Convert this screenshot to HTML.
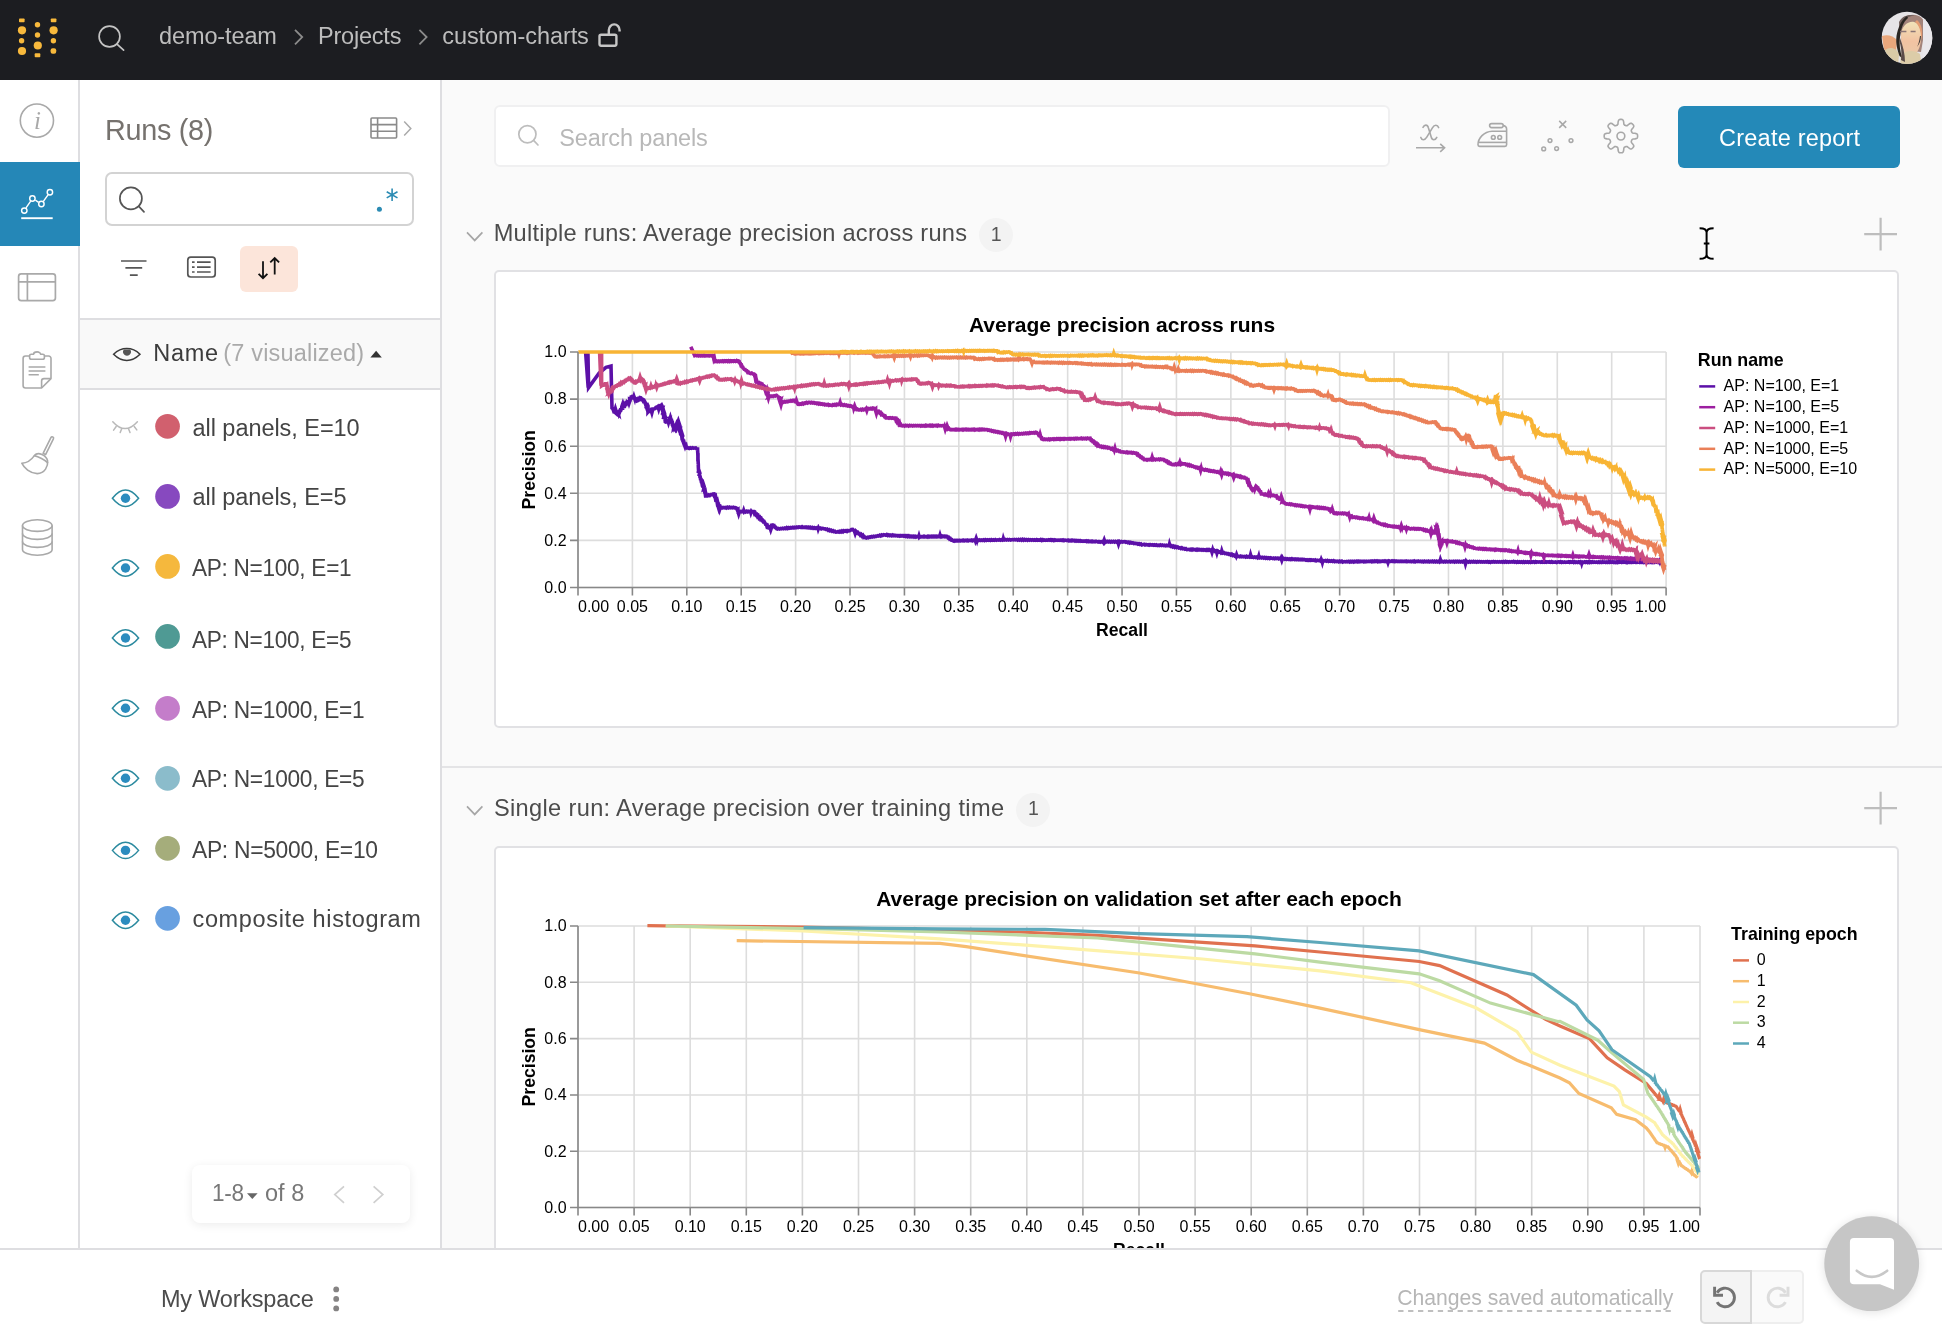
<!DOCTYPE html>
<html lang="en"><head><meta charset="utf-8"><title>custom-charts | Weights &amp; Biases</title>
<style>
html,body{margin:0;padding:0;overflow:hidden}
body{width:1942px;height:1334px;overflow:hidden;position:relative;background:#fafafa;font-family:"Liberation Sans",sans-serif}
#app{position:absolute;left:0;top:0;width:1942px;height:1334px;overflow:hidden;will-change:transform}
.t{position:absolute;white-space:nowrap;line-height:1}
svg{position:absolute;left:0;top:0;overflow:visible}
svg text{font-family:"Liberation Sans",sans-serif}
</style></head><body><div id="app">
<div style="position:absolute;left:442px;top:766px;width:1500px;height:2px;background:#e4e4e6"></div>
<div style="position:absolute;left:494px;top:270px;width:1405px;height:458px;box-sizing:border-box;background:#fff;border:2px solid #e1e1e4;border-radius:5px"></div>
<div style="position:absolute;left:494px;top:846px;width:1405px;height:440px;box-sizing:border-box;background:#fff;border:2px solid #e1e1e4;border-radius:5px"></div>
<div style="position:absolute;left:494px;top:105px;width:896px;height:62px;box-sizing:border-box;background:#fff;border:2px solid #f0f0f1;border-radius:6px"></div>
<div style="position:absolute;left:1678px;top:106px;width:222px;height:62px;background:#2489b8;border-radius:6px"></div>
<div class="t" style="left:559.24px;top:126.61px;font-size:23.5px;color:#b8b8b8;letter-spacing:-0.136px;">Search panels</div>
<div class="t" style="left:1719.12px;top:126.81px;font-size:23.5px;color:#fff;letter-spacing:0.215px;">Create report</div>
<div class="t" style="left:493.66px;top:222.32px;font-size:23.6px;color:#4c4c4c;letter-spacing:0.251px;">Multiple runs: Average precision across runs</div>
<div class="t" style="left:493.94px;top:796.52px;font-size:23.6px;color:#4c4c4c;letter-spacing:0.342px;">Single run: Average precision over training time</div>
<div style="position:absolute;left:979px;top:218px;width:34px;height:34px;background:#f3f3f3;border-radius:50%"></div>
<div class="t" style="left:990.82px;top:225.39px;font-size:19.5px;color:#555;">1</div>
<div style="position:absolute;left:1016px;top:792.5px;width:34px;height:34px;background:#f3f3f3;border-radius:50%"></div>
<div class="t" style="left:1027.92px;top:799.49px;font-size:19.5px;color:#555;">1</div>
<svg width="1942" height="1334" viewBox="0 0 1942 1334">
<path d="M578.00,352.00V587.50M632.40,352.00V587.50M686.81,352.00V587.50M741.21,352.00V587.50M795.62,352.00V587.50M850.02,352.00V587.50M904.43,352.00V587.50M958.83,352.00V587.50M1013.24,352.00V587.50M1067.64,352.00V587.50M1122.05,352.00V587.50M1176.45,352.00V587.50M1230.86,352.00V587.50M1285.26,352.00V587.50M1339.67,352.00V587.50M1394.07,352.00V587.50M1448.48,352.00V587.50M1502.88,352.00V587.50M1557.29,352.00V587.50M1611.69,352.00V587.50M1666.10,352.00V587.50M578.00,587.50H1666.10M578.00,540.40H1666.10M578.00,493.30H1666.10M578.00,446.20H1666.10M578.00,399.10H1666.10M578.00,352.00H1666.10" stroke="#dddddd" stroke-width="1.6" fill="none"/>
<path d="M578.00,587.50v8M632.40,587.50v8M686.81,587.50v8M741.21,587.50v8M795.62,587.50v8M850.02,587.50v8M904.43,587.50v8M958.83,587.50v8M1013.24,587.50v8M1067.64,587.50v8M1122.05,587.50v8M1176.45,587.50v8M1230.86,587.50v8M1285.26,587.50v8M1339.67,587.50v8M1394.07,587.50v8M1448.48,587.50v8M1502.88,587.50v8M1557.29,587.50v8M1611.69,587.50v8M1666.10,587.50v8M578.00,587.50h-8M578.00,540.40h-8M578.00,493.30h-8M578.00,446.20h-8M578.00,399.10h-8M578.00,352.00h-8" stroke="#888888" stroke-width="1.6" fill="none"/>
<path d="M585.6,352.0L588.2,387.6L587.9,352.0L588.6,387.6L599.2,373.0L606.0,367.3L611.0,366.0L612.0,408.0L612.7,408.5L613.4,410.4L614.1,410.0L614.7,412.1L614.4,412.0L615.4,408.7L616.4,412.0L616.1,413.4L616.8,414.0L617.5,412.5L618.2,413.3L617.8,411.4L618.8,414.2L619.9,411.4L619.5,411.3L620.2,409.9L620.9,410.0L621.5,408.3L622.2,408.3L621.8,406.7L622.9,403.5L624.0,406.7L623.6,406.8L624.3,404.8L624.9,405.3L625.6,403.4L626.3,403.9L627.0,401.9L627.7,402.4L628.3,400.3L628.2,400.9L629.0,403.3L629.8,400.9L629.7,399.2L630.4,399.5L631.0,397.5L631.7,397.8L632.4,396.5L633.2,396.7L633.2,398.6L633.9,396.5L634.6,398.6L634.7,398.1L635.5,399.9L636.2,399.4L637.0,401.0L637.8,400.7L638.5,398.8L639.2,399.2L640.0,397.5L640.8,397.7L641.7,399.6L642.5,399.5L643.3,401.2L644.2,400.6L645.0,402.0L645.6,403.4L645.1,403.1L646.2,406.4L647.3,403.1L646.8,405.0L647.4,404.7L648.0,406.0L648.0,407.6L648.0,407.4L648.0,409.3L648.0,409.6L648.0,411.8L648.0,412.0L649.0,410.9L649.9,411.3L650.9,410.0L651.1,410.2L651.9,412.8L652.6,410.2L652.8,409.0L653.8,409.0L654.8,408.7L655.8,407.6L656.7,407.8L657.7,406.6L658.1,406.9L658.7,408.9L659.3,406.9L659.6,405.8L660.6,405.9L661.6,405.0L661.8,405.4L661.3,407.3L662.1,409.5L662.8,407.3L662.3,407.3L662.5,409.6L662.7,409.1L663.0,411.6L663.2,411.3L663.4,413.6L662.8,413.4L663.7,410.9L664.6,413.4L663.9,415.4L664.1,415.5L664.4,417.7L663.7,417.6L664.6,414.3L665.5,417.6L664.8,419.8L665.0,419.6L665.3,421.9L665.5,422.0L666.2,420.8L667.0,421.1L667.8,419.4L667.6,419.7L668.5,422.6L669.4,419.7L669.2,418.2L670.0,418.0L669.7,419.8L670.4,417.5L671.1,419.8L670.8,419.2L671.2,421.3L671.7,421.1L672.1,423.3L672.5,423.1L672.9,425.6L672.5,425.0L673.3,427.3L674.1,425.0L673.8,427.4L674.2,426.9L674.6,429.1L675.0,429.6L675.4,427.9L675.8,428.5L676.1,426.4L675.7,426.1L676.5,424.0L677.3,426.1L676.9,424.1L677.2,424.5L677.6,422.5L678.0,422.0L677.4,423.4L678.3,421.0L679.1,423.4L678.5,423.2L678.8,425.4L678.2,425.2L679.1,428.2L679.9,425.2L678.4,427.8L679.3,430.2L680.2,427.8L679.6,427.7L679.8,429.4L680.1,429.7L680.4,431.5L680.6,431.2L680.9,433.4L681.2,433.7L680.4,435.3L681.4,431.8L682.5,435.3L681.7,435.5L681.9,437.3L682.2,437.1L682.5,439.3L682.7,439.4L683.0,441.0L683.5,442.5L684.0,442.1L684.5,444.2L684.1,444.1L685.0,446.5L685.9,444.1L685.5,446.0L686.0,445.4L686.5,447.6L687.0,448.0L688.1,447.8L689.2,448.4L690.3,447.8L691.4,448.3L692.5,447.8L693.6,448.2L694.7,448.0L695.7,447.9L696.6,448.9L697.6,449.0L697.6,449.6L697.7,451.6L697.7,451.7L697.8,453.8L697.8,453.3L697.9,455.9L697.9,455.4L697.9,457.5L698.0,457.4L698.0,460.0L698.1,459.4L698.1,461.7L698.2,461.5L698.2,464.1L698.3,463.6L698.3,465.9L698.3,465.7L698.4,467.8L698.4,467.6L698.5,470.0L698.5,469.7L698.6,472.0L698.6,472.5L698.0,473.1L698.9,470.1L699.9,473.1L699.2,474.8L699.6,475.1L699.9,476.8L700.2,476.9L700.5,479.0L700.9,479.1L701.2,480.9L701.5,480.8L701.9,483.0L702.2,482.7L702.5,484.6L702.8,484.6L703.1,487.0L702.8,486.5L703.5,484.4L704.2,486.5L703.8,488.5L704.1,488.3L704.5,490.8L704.8,490.6L705.1,492.8L705.4,492.3L705.8,494.9L706.1,494.7L706.4,496.0L707.5,496.0L708.6,495.0L709.7,495.6L710.7,494.6L711.8,494.8L712.9,494.1L714.0,494.0L714.4,495.7L714.9,495.5L715.3,497.8L715.7,497.2L716.1,499.5L716.6,499.3L717.0,501.7L717.4,501.0L717.9,503.1L718.3,503.4L717.8,505.5L718.7,508.4L719.6,505.5L719.1,505.2L718.9,507.3L719.6,509.6L720.3,507.3L720.0,507.6L721.0,507.3L722.1,508.0L723.1,507.4L724.2,507.8L725.2,507.4L726.2,508.0L727.3,507.2L728.3,507.9L729.4,507.2L730.4,507.8L731.4,507.4L732.5,507.8L733.5,507.3L734.6,507.9L735.6,507.6L736.4,508.0L737.2,509.8L737.9,509.4L737.9,511.3L738.7,514.0L739.6,511.3L739.5,511.5L740.5,511.3L741.6,511.8L742.6,511.2L743.3,511.7L743.7,510.5L744.1,511.7L744.7,511.1L745.7,511.9L746.8,511.1L747.8,511.8L748.8,511.3L749.9,511.8L750.5,511.3L750.9,512.7L751.4,511.3L752.0,511.9L753.0,511.5L753.8,511.5L754.5,513.6L755.2,513.0L756.0,515.0L756.8,514.6L757.5,516.4L758.2,515.8L759.0,518.0L759.8,517.4L760.5,519.1L761.2,518.6L762.0,520.5L762.8,520.3L763.5,521.8L764.2,521.6L765.0,523.0L765.6,524.3L766.3,524.4L766.9,526.3L767.5,525.8L768.2,527.8L768.8,528.0L769.8,526.9L769.7,526.9L770.7,529.9L771.7,526.9L771.6,525.2L772.6,525.0L773.4,526.0L774.2,525.7L775.0,527.4L775.9,527.3L776.7,528.7L777.5,529.0L778.5,528.5L779.5,529.0L780.6,528.4L781.6,528.8L782.6,528.2L783.6,528.7L784.7,528.0L785.7,528.6L786.7,527.7L787.7,528.5L788.8,527.7L789.8,528.2L790.8,527.6L791.8,528.0L792.8,527.4L793.9,527.9L794.9,527.3L795.9,527.7L796.9,527.1L798.0,527.5L799.0,526.9L800.0,527.0L801.0,527.4L802.0,526.7L803.0,527.5L804.1,527.1L805.1,527.5L806.1,527.1L807.1,527.7L808.1,527.2L809.1,527.9L810.1,527.3L811.1,528.1L812.2,527.4L813.2,528.3L814.2,527.7L815.2,528.4L816.2,527.9L817.2,528.6L817.9,527.8L818.2,528.9L818.6,527.8L819.2,528.6L820.3,528.1L821.3,528.9L822.3,528.4L823.3,528.6L824.3,529.0L825.3,528.9L826.2,529.5L827.2,529.1L828.2,530.3L829.2,529.8L830.1,530.8L831.1,530.3L832.1,531.3L833.1,530.7L834.1,531.6L835.0,531.3L836.0,532.1L837.0,532.0L838.0,531.5L839.0,532.1L840.0,531.3L841.0,532.0L842.0,531.0L843.0,531.8L844.0,530.8L845.0,531.3L846.0,530.7L847.0,531.4L848.0,530.5L849.0,530.9L850.0,530.6L851.4,529.5L852.7,529.4L853.5,530.2L854.4,530.3L854.5,531.3L855.2,533.5L856.0,531.3L856.1,531.4L856.9,532.8L857.7,532.4L858.6,533.7L859.4,533.5L860.3,535.1L861.1,534.5L861.9,536.1L862.8,535.4L863.6,537.3L864.5,536.8L865.3,537.8L866.3,538.1L867.4,537.3L868.4,537.7L869.4,536.9L870.4,537.2L871.5,536.5L872.5,537.0L873.5,536.3L874.5,536.7L875.6,536.1L876.6,536.4L877.6,535.8L878.6,536.1L879.7,535.2L880.7,535.9L881.7,534.9L882.7,535.4L883.8,534.7L884.8,534.9L885.8,535.3L886.8,534.6L887.8,535.5L888.8,534.9L889.8,535.6L890.8,535.1L891.8,535.7L892.8,534.9L893.9,535.7L894.9,535.3L895.9,535.8L896.9,535.4L897.9,536.0L898.9,535.5L899.9,536.2L900.9,535.6L901.9,536.0L902.9,535.5L903.9,536.2L904.9,535.7L905.9,536.5L906.9,535.8L907.9,536.7L908.9,535.9L910.0,536.8L911.0,536.2L912.0,536.8L913.0,536.2L914.0,537.0L915.0,536.3L916.0,537.1L917.0,536.5L918.0,536.8L918.7,537.1L919.0,536.1L919.3,537.1L920.0,536.4L921.0,537.0L922.0,536.5L923.0,537.0L924.0,536.3L925.0,537.0L926.0,536.5L927.0,537.0L928.0,536.2L929.0,537.0L930.0,536.3L931.0,536.9L932.0,536.2L933.0,536.9L934.0,536.2L935.0,536.8L936.0,536.2L937.0,536.9L938.0,536.3L939.0,536.7L939.7,536.2L940.0,535.2L940.3,536.2L941.0,536.8L942.0,536.0L943.0,536.7L944.0,536.1L945.0,536.8L946.0,536.1L947.0,536.4L947.9,537.7L948.7,537.4L949.6,539.0L950.4,538.6L951.3,539.9L952.1,539.7L953.0,540.7L954.0,541.1L955.0,540.4L956.0,540.9L957.0,540.4L958.0,541.0L959.1,540.3L960.1,540.9L961.1,540.4L962.1,540.8L963.1,540.1L964.1,540.8L965.1,540.2L966.1,540.7L967.1,540.1L968.1,540.8L969.1,540.2L970.1,540.6L971.2,540.1L972.2,540.8L973.2,540.1L974.2,540.6L975.2,540.0L975.4,540.6L976.2,538.3L977.0,540.6L977.2,539.9L978.2,540.6L979.2,539.9L980.2,540.4L981.2,539.9L982.2,540.4L983.3,539.9L984.3,540.6L985.3,539.8L986.3,540.4L987.3,539.8L988.3,540.3L989.3,539.8L990.3,540.4L991.3,539.7L992.3,540.3L993.3,539.8L994.4,540.3L995.4,539.6L996.4,540.2L997.4,539.8L998.4,540.1L999.4,539.6L1000.4,540.2L1001.4,539.7L1002.4,540.2L1003.2,539.6L1003.4,538.7L1003.7,539.6L1004.4,540.0L1005.4,539.5L1006.5,540.0L1007.5,539.5L1008.5,540.0L1009.5,539.5L1010.5,540.0L1011.5,539.7L1012.5,539.6L1013.5,539.9L1014.5,539.5L1015.5,539.9L1016.5,539.5L1017.6,540.1L1018.6,539.4L1019.6,540.1L1020.6,539.4L1021.6,540.2L1022.6,539.4L1023.6,540.2L1024.6,539.5L1025.6,540.1L1026.6,539.6L1027.6,540.3L1028.7,539.6L1029.7,540.2L1030.7,539.7L1031.7,540.2L1032.7,539.7L1033.7,540.2L1034.7,539.8L1035.7,540.3L1036.7,539.7L1037.7,540.3L1038.8,539.9L1039.8,540.3L1040.8,539.6L1041.8,540.4L1042.8,539.7L1043.8,540.3L1044.8,539.9L1045.8,540.3L1046.8,539.9L1047.8,540.3L1048.8,539.7L1049.9,540.3L1050.9,539.7L1051.9,540.4L1052.9,539.8L1053.9,540.5L1054.9,539.9L1055.9,540.4L1056.9,540.1L1057.9,540.3L1058.9,540.1L1059.9,540.4L1061.0,540.0L1062.0,540.5L1063.0,539.9L1064.0,540.6L1065.0,540.1L1066.0,540.3L1067.0,540.6L1068.0,540.1L1069.0,540.8L1070.0,540.3L1071.0,540.8L1072.0,540.1L1073.0,540.8L1074.0,540.4L1075.0,541.1L1076.0,540.4L1077.0,541.1L1078.0,540.5L1079.0,541.1L1080.0,540.6L1081.0,541.3L1082.0,540.9L1083.0,541.3L1084.0,540.9L1085.0,541.3L1086.0,540.8L1087.0,541.6L1088.0,541.0L1089.0,541.7L1090.0,541.2L1091.0,541.7L1092.0,541.1L1093.0,541.7L1094.0,541.4L1095.0,541.8L1096.0,541.3L1097.0,541.7L1098.0,542.1L1099.0,541.5L1100.1,542.1L1101.1,541.6L1102.1,542.0L1103.1,541.3L1103.4,541.9L1104.2,539.9L1104.9,541.9L1105.2,541.4L1106.2,541.9L1107.2,541.3L1108.3,541.9L1109.3,541.4L1110.3,542.1L1111.3,541.4L1112.3,542.0L1113.4,541.4L1114.4,542.1L1115.4,541.4L1116.4,542.0L1117.5,541.4L1117.8,541.9L1118.5,544.1L1119.2,541.9L1119.5,541.5L1120.5,542.1L1121.6,541.5L1122.6,542.0L1123.6,541.7L1124.6,541.6L1125.6,542.3L1126.7,541.9L1127.7,542.6L1128.7,542.1L1129.7,543.0L1130.7,542.4L1131.8,543.1L1132.8,542.8L1133.8,543.5L1134.8,543.2L1135.9,543.7L1136.9,543.4L1137.9,544.1L1138.9,543.6L1139.9,544.4L1141.0,543.9L1142.0,544.9L1143.0,544.6L1144.0,544.3L1145.0,545.0L1146.1,544.5L1147.1,544.9L1148.1,544.6L1149.1,545.2L1150.1,544.6L1151.2,545.1L1152.2,544.7L1153.2,545.2L1154.2,544.8L1155.2,545.3L1156.3,544.8L1157.3,545.5L1158.3,545.1L1159.3,545.5L1160.3,544.9L1161.4,545.5L1162.4,545.0L1163.4,545.6L1164.4,545.3L1165.4,545.8L1166.5,545.3L1167.5,545.7L1168.5,545.6L1169.2,545.6L1169.5,544.3L1169.9,545.6L1170.6,546.3L1171.6,545.8L1172.6,546.8L1173.6,546.1L1174.7,547.3L1175.7,546.6L1176.7,547.5L1177.7,547.0L1178.8,548.0L1179.8,547.7L1180.8,548.5L1181.8,547.8L1182.9,548.7L1183.9,548.5L1184.9,549.2L1185.9,548.7L1187.0,549.6L1188.0,549.5L1189.0,549.3L1190.0,549.9L1191.0,549.2L1192.0,550.0L1193.0,549.2L1194.0,549.8L1195.0,549.4L1196.0,550.0L1197.0,549.3L1198.0,550.1L1199.0,549.4L1200.0,550.0L1201.0,549.5L1202.0,550.1L1203.0,549.6L1204.0,550.2L1205.0,549.7L1206.0,550.3L1207.0,549.5L1208.0,550.3L1209.0,549.5L1210.0,550.3L1211.0,550.0L1211.2,549.9L1212.0,552.3L1212.7,549.9L1213.0,550.8L1214.0,550.3L1214.9,551.3L1215.9,550.8L1216.5,551.8L1216.9,553.1L1217.3,551.8L1217.9,551.1L1218.9,552.0L1219.9,551.7L1220.9,552.8L1221.5,552.1L1221.8,550.9L1222.2,552.1L1222.8,553.0L1223.8,552.6L1224.8,553.5L1225.8,553.2L1226.8,553.9L1227.8,553.6L1228.7,554.3L1229.7,554.0L1230.7,554.9L1231.7,554.2L1232.7,555.4L1233.7,554.9L1234.7,555.9L1235.6,555.3L1236.1,556.3L1236.6,554.7L1237.2,556.3L1237.6,555.9L1238.6,556.3L1239.6,556.7L1240.6,556.1L1241.6,556.7L1242.6,556.4L1243.6,556.8L1244.6,556.5L1245.6,557.1L1246.6,556.3L1247.6,557.0L1248.6,556.7L1249.6,557.1L1250.1,556.7L1250.6,554.7L1251.2,556.7L1251.6,557.2L1252.6,556.9L1253.6,557.5L1254.6,557.0L1255.7,557.5L1256.7,557.0L1257.7,557.8L1258.4,557.2L1258.7,556.3L1258.9,557.2L1259.7,557.9L1260.7,557.3L1261.7,557.9L1262.7,557.4L1263.7,558.1L1264.7,557.4L1265.7,558.2L1266.7,557.6L1267.7,558.3L1268.7,557.8L1269.7,558.5L1270.7,557.8L1271.7,558.2L1272.7,558.6L1273.7,558.1L1274.7,558.7L1275.7,558.1L1276.7,558.6L1277.8,558.1L1278.8,558.9L1279.8,558.3L1280.8,559.0L1281.1,558.3L1281.8,560.3L1282.5,558.3L1282.8,558.9L1283.8,558.5L1284.8,559.2L1285.8,558.7L1286.8,559.4L1287.8,558.8L1288.9,559.5L1289.9,558.9L1290.9,559.5L1291.9,558.8L1292.9,559.5L1293.9,559.0L1294.9,559.6L1295.9,559.0L1296.9,559.6L1297.9,559.1L1298.9,559.8L1300.0,559.3L1301.0,559.8L1302.0,559.3L1303.0,559.8L1304.0,559.5L1305.0,559.8L1306.0,560.2L1307.0,559.7L1308.1,560.4L1309.1,559.8L1310.1,560.4L1311.1,559.8L1312.1,560.3L1313.2,560.0L1314.2,560.5L1315.2,559.9L1316.2,560.8L1317.3,560.2L1318.3,560.6L1319.3,560.2L1320.3,561.0L1321.0,560.4L1321.3,559.5L1321.7,560.4L1321.9,560.8L1322.4,562.5L1322.9,560.8L1323.4,560.6L1324.4,560.9L1325.4,560.5L1326.4,561.1L1327.5,560.5L1328.5,561.3L1329.5,560.8L1330.5,561.2L1331.5,560.8L1332.6,561.4L1333.6,560.8L1334.6,561.6L1335.6,561.1L1336.7,561.5L1337.7,561.2L1338.7,561.8L1339.7,561.1L1340.7,561.7L1341.8,561.2L1342.8,562.1L1343.8,561.7L1344.8,561.5L1345.8,561.9L1346.8,561.5L1347.8,561.9L1348.8,561.4L1349.8,562.0L1350.8,561.3L1351.8,561.9L1352.8,561.4L1353.8,562.0L1354.8,561.3L1355.9,561.7L1356.9,561.2L1357.9,561.9L1358.9,561.2L1359.9,561.8L1360.9,561.3L1361.9,561.6L1362.9,561.3L1363.9,561.9L1364.9,561.3L1365.9,561.8L1366.9,561.3L1367.9,561.6L1368.9,561.2L1369.9,561.6L1370.9,561.1L1371.9,561.8L1372.9,561.1L1373.9,561.6L1374.9,560.9L1375.9,561.5L1376.9,560.9L1377.9,561.7L1379.0,561.0L1380.0,561.6L1381.0,561.1L1382.0,561.4L1383.0,561.0L1384.0,561.5L1385.0,560.9L1386.0,561.5L1387.0,561.1L1387.7,561.6L1388.0,562.5L1388.3,561.6L1389.0,560.8L1390.0,561.2L1391.0,561.4L1392.0,560.9L1393.0,561.5L1394.0,560.9L1395.0,561.6L1396.1,561.0L1397.1,561.5L1398.1,561.1L1399.1,561.6L1400.1,561.1L1401.1,561.5L1402.1,561.1L1403.1,561.6L1404.1,561.2L1405.1,561.5L1406.1,561.0L1407.1,561.7L1408.2,561.2L1409.2,561.6L1410.2,561.2L1411.2,561.7L1412.2,561.2L1413.2,561.7L1414.2,561.0L1415.2,561.8L1416.2,561.2L1417.2,561.6L1418.2,561.1L1419.2,561.6L1420.3,561.2L1421.3,561.8L1422.3,561.3L1423.3,561.9L1424.3,561.2L1425.3,561.8L1426.3,561.3L1427.3,561.8L1428.3,561.2L1429.3,561.9L1430.3,561.3L1431.4,561.8L1432.4,561.2L1433.4,561.8L1434.4,561.2L1435.4,561.9L1436.4,561.2L1437.4,561.9L1438.4,561.3L1439.4,562.0L1439.9,561.4L1440.4,559.7L1441.0,561.4L1441.4,561.8L1442.4,561.5L1443.5,562.0L1444.5,561.3L1445.5,561.9L1446.5,561.3L1447.5,561.9L1448.5,561.7L1449.5,561.3L1450.5,562.0L1451.5,561.5L1452.5,561.8L1453.5,561.3L1454.5,562.0L1455.5,561.3L1456.5,561.9L1457.5,561.3L1458.5,561.9L1459.5,561.4L1460.5,562.0L1461.5,561.5L1462.5,561.9L1463.5,561.3L1464.5,562.1L1464.9,561.6L1465.5,563.9L1466.2,561.6L1466.5,562.1L1467.5,561.5L1468.5,562.1L1469.5,561.4L1470.5,562.1L1471.5,561.5L1472.5,562.0L1473.5,561.4L1474.5,562.0L1475.5,561.5L1476.5,562.2L1477.5,561.6L1478.5,562.0L1479.5,561.5L1480.5,562.0L1481.5,561.6L1482.5,562.1L1483.5,561.7L1484.5,562.1L1485.5,561.6L1486.5,562.0L1487.5,561.6L1488.5,562.2L1489.5,561.7L1490.5,562.3L1491.5,561.7L1492.5,562.1L1493.5,561.5L1494.5,562.0L1495.5,561.7L1496.5,562.1L1497.5,561.7L1498.5,562.1L1499.5,561.7L1500.5,562.1L1501.5,561.7L1502.5,562.2L1503.6,561.6L1504.6,562.1L1505.6,561.5L1506.6,562.2L1507.6,561.7L1508.6,562.2L1509.6,561.7L1510.6,562.1L1511.6,561.7L1512.6,562.1L1513.6,561.5L1514.6,562.2L1515.6,561.7L1516.6,562.3L1517.6,561.7L1518.6,562.3L1519.6,561.8L1520.6,562.3L1521.6,561.8L1522.6,562.4L1523.6,561.7L1524.6,562.4L1525.6,561.8L1526.6,562.2L1527.6,561.8L1528.6,562.4L1529.6,561.8L1530.6,562.3L1531.6,561.6L1532.6,562.2L1533.6,561.7L1534.6,562.3L1535.6,561.6L1536.6,562.2L1537.6,561.9L1538.6,562.2L1539.6,561.9L1540.6,562.3L1541.6,561.7L1542.6,562.2L1543.6,561.9L1544.6,562.3L1545.6,561.7L1546.6,562.3L1547.6,561.9L1548.6,562.2L1549.6,561.8L1550.6,562.3L1551.6,561.7L1552.6,562.3L1553.6,562.0L1554.6,562.2L1555.6,561.9L1556.6,562.5L1557.6,562.1L1558.6,561.9L1559.6,562.3L1560.6,561.7L1561.6,562.4L1562.6,561.9L1563.6,562.3L1564.6,561.9L1565.6,562.4L1566.6,562.0L1567.6,562.2L1568.6,561.8L1569.6,562.4L1570.6,561.7L1571.7,562.2L1572.7,561.7L1573.7,562.5L1574.7,561.8L1575.7,562.5L1576.7,562.0L1577.7,562.4L1578.7,561.8L1579.7,562.5L1580.7,561.8L1581.4,562.3L1581.7,563.3L1582.0,562.3L1582.7,562.0L1583.7,562.5L1584.7,561.8L1585.7,562.4L1586.7,561.8L1587.7,562.5L1588.7,561.8L1589.7,562.5L1590.7,561.8L1591.7,562.4L1592.7,561.8L1593.7,562.3L1594.7,561.9L1595.7,562.3L1596.7,561.9L1597.8,562.5L1598.8,561.9L1599.8,562.4L1600.8,561.9L1601.8,562.4L1602.8,561.8L1603.8,562.3L1604.8,561.9L1605.8,562.4L1606.8,561.9L1607.8,562.4L1608.8,561.8L1609.8,562.4L1610.8,561.8L1611.8,562.3L1612.8,561.8L1613.8,562.4L1614.8,562.0L1615.8,562.5L1616.8,561.7L1617.8,562.5L1618.8,561.8L1619.8,562.3L1620.8,561.7L1621.8,562.4L1622.8,561.7L1623.9,562.3L1624.9,561.8L1625.9,562.4L1626.4,561.8L1626.9,560.6L1627.3,561.8L1627.9,562.4L1628.9,561.8L1629.9,562.4L1630.9,561.7L1631.9,562.4L1632.9,561.8L1633.9,562.3L1634.9,561.9L1635.9,562.4L1636.9,561.7L1637.9,562.3L1638.9,561.9L1639.9,562.4L1640.9,561.9L1641.9,562.4L1642.9,561.7L1643.9,562.5L1644.9,561.8L1645.9,562.4L1646.9,561.7L1647.9,562.5L1648.9,561.8L1650.0,562.4L1651.0,561.9L1652.0,562.5L1653.0,561.7L1654.0,562.5L1655.0,561.7L1656.0,562.3L1657.0,561.8L1658.0,562.4L1659.0,561.8L1659.5,562.5L1660.0,561.2L1660.4,562.5L1661.0,561.7L1662.0,562.5L1663.0,562.1" stroke="#5c10a8" stroke-width="3.6" fill="none" stroke-linejoin="miter" stroke-miterlimit="4"/>
<path d="M690.8,346.8L694.7,355.6L695.7,355.2L696.8,355.7L697.8,355.2L698.8,355.9L699.8,355.3L700.9,355.9L701.9,355.3L702.9,355.9L704.0,355.2L705.0,355.9L706.0,355.5L707.0,355.9L708.1,355.4L709.1,355.9L710.1,355.4L711.1,355.8L712.2,355.3L713.2,355.6L713.5,357.2L713.9,356.7L714.2,359.2L714.5,358.7L714.9,360.9L715.2,361.4L716.2,361.0L717.2,361.7L718.3,361.1L719.3,361.6L720.3,361.0L721.3,361.5L722.3,360.9L723.3,361.6L724.4,360.9L725.4,361.4L726.4,360.9L727.4,361.6L728.4,360.8L729.4,361.6L730.5,360.9L731.5,361.4L732.5,360.9L733.5,361.4L734.5,360.8L735.5,361.4L736.6,360.6L737.6,361.4L738.6,361.0L739.2,361.3L739.8,363.2L740.4,363.4L741.0,365.4L741.6,365.2L742.2,367.0L742.8,367.1L743.4,368.3L744.2,369.3L745.1,369.4L745.9,370.6L746.8,370.7L747.6,372.3L748.5,372.0L749.3,373.0L750.5,373.5L751.7,373.0L752.9,373.9L754.1,374.0L754.5,374.4L754.8,376.3L755.2,376.7L755.5,378.7L755.9,378.1L756.3,380.7L756.6,380.4L757.0,381.9L757.9,383.0L758.8,382.7L759.6,384.2L760.5,383.6L761.4,385.1L762.3,384.5L763.1,386.2L764.0,386.0L764.9,386.8L764.7,388.1L765.3,390.2L765.9,388.1L765.7,388.1L766.1,390.6L766.5,389.8L766.8,392.2L767.2,392.0L767.6,394.3L768.0,394.1L767.8,396.1L768.4,398.2L769.0,396.1L768.8,396.5L769.9,396.0L771.0,396.5L772.0,396.0L773.1,396.4L774.2,395.7L775.3,396.0L776.3,395.3L777.4,395.9L778.5,395.5L778.1,395.9L778.9,398.5L779.8,395.9L779.3,397.8L779.7,398.0L780.2,400.3L780.6,400.0L780.1,401.9L781.0,404.9L781.8,401.9L781.4,402.4L782.4,401.8L783.5,402.2L784.5,401.6L785.6,402.0L786.6,401.4L787.7,401.7L788.8,401.1L789.8,401.3L790.9,400.6L791.9,401.1L793.0,400.4L794.0,400.4L794.8,401.5L795.6,401.3L795.4,403.4L796.4,400.5L797.4,403.4L797.2,403.0L798.0,404.3L799.1,404.4L800.1,403.7L801.2,404.1L802.3,403.2L803.3,403.9L804.4,403.0L805.4,403.3L806.5,402.5L807.6,403.1L808.6,402.4L809.7,402.4L810.7,403.0L811.7,402.4L812.7,403.0L813.8,402.5L814.8,403.3L815.8,403.0L816.8,403.7L817.8,403.2L818.8,404.0L819.8,403.4L820.9,404.2L821.9,403.8L822.9,404.5L823.9,404.1L824.9,404.9L825.9,404.4L826.9,404.9L828.0,404.4L829.0,405.3L830.0,404.9L831.0,405.3L832.0,405.6L833.0,404.7L834.0,405.2L835.0,404.4L836.0,405.1L837.0,404.2L838.0,404.8L839.0,404.3L839.5,404.1L840.1,402.4L840.6,404.1L841.1,405.0L842.2,404.6L843.2,405.4L844.3,404.7L845.4,405.5L846.4,405.1L847.5,406.0L848.5,405.6L849.6,406.2L850.6,405.8L851.7,406.3L852.7,407.3L853.6,407.1L853.8,408.1L854.6,405.9L855.4,408.1L855.6,407.9L856.6,409.5L857.5,409.1L858.5,410.0L859.5,410.0L860.6,409.4L861.6,410.0L862.6,409.2L863.7,409.8L864.7,409.1L865.7,409.4L866.1,408.8L866.8,410.6L867.4,408.8L867.8,409.2L868.8,408.5L869.9,408.9L870.9,408.3L871.9,408.9L873.0,407.9L874.0,408.2L874.8,409.4L875.6,408.8L875.6,410.7L876.4,413.4L877.2,410.7L877.2,410.0L878.0,411.8L878.8,411.5L879.6,412.8L880.4,412.4L881.2,414.4L882.0,413.9L882.8,415.2L883.6,415.2L884.4,416.5L885.2,416.1L886.0,418.0L886.8,418.0L887.9,417.8L889.0,418.2L890.1,417.7L891.3,418.2L892.4,417.8L893.5,418.3L894.6,418.0L895.3,418.0L896.0,420.3L896.6,419.7L897.3,421.9L898.0,421.1L898.7,423.5L899.4,422.5L900.0,424.8L900.7,424.4L901.4,425.7L902.4,425.9L903.4,425.5L904.5,426.1L905.5,425.3L906.5,425.8L907.5,425.5L908.6,426.1L909.6,425.4L910.6,425.9L911.6,425.5L912.6,426.0L913.7,425.5L914.7,425.9L915.7,425.5L916.7,425.9L917.8,425.5L918.8,425.9L919.8,425.5L920.8,426.1L921.8,425.5L922.9,426.0L923.9,425.5L924.9,426.1L925.9,425.3L926.9,425.9L928.0,425.5L929.0,426.0L930.0,425.3L931.0,426.0L932.1,425.3L933.1,426.1L934.1,425.5L935.1,425.8L936.1,425.3L937.2,426.1L938.2,425.3L939.2,425.9L940.2,425.6L941.3,425.9L942.3,425.5L943.3,425.7L944.3,426.5L944.4,426.3L945.2,429.1L946.1,426.3L946.2,427.8L946.5,427.5L947.1,425.7L947.8,427.5L948.1,428.9L949.0,428.4L950.0,429.6L951.0,429.9L952.0,429.4L953.0,429.8L954.0,429.4L955.0,429.9L956.0,429.2L957.0,429.9L958.0,429.4L959.0,430.0L960.0,429.4L961.0,429.8L962.0,429.3L963.0,430.0L964.0,429.3L965.0,429.8L966.0,429.2L967.0,429.9L968.0,429.3L969.0,429.9L970.0,429.4L971.0,429.9L972.0,429.3L973.0,429.9L974.0,429.2L975.0,430.0L976.0,429.5L977.0,429.8L978.0,429.3L979.0,430.0L980.0,429.2L981.0,429.8L982.0,429.2L983.0,429.8L984.0,429.3L985.0,429.8L986.0,429.6L987.0,429.5L988.0,430.2L988.9,430.0L989.9,430.6L990.9,430.3L991.9,431.2L992.9,430.8L993.8,431.6L994.8,431.1L995.8,431.9L996.8,431.6L997.8,432.4L998.7,431.9L999.7,432.7L1000.7,432.3L1001.7,433.1L1002.6,432.7L1003.6,433.7L1004.6,433.3L1004.9,433.9L1005.6,436.3L1006.3,433.9L1006.6,433.6L1007.5,434.5L1008.5,434.0L1009.5,434.5L1010.0,434.8L1010.5,436.6L1011.0,434.8L1011.5,434.0L1012.5,434.4L1013.5,433.8L1014.6,434.4L1015.6,433.7L1016.6,434.2L1017.6,433.5L1018.6,434.2L1019.6,433.5L1020.6,434.0L1021.6,433.5L1022.6,433.9L1023.7,433.2L1024.7,433.7L1025.7,433.1L1026.7,433.6L1027.7,433.0L1028.7,433.6L1029.7,432.7L1030.7,433.2L1031.7,432.7L1032.8,433.0L1033.8,432.5L1034.8,433.1L1035.8,432.3L1036.8,432.6L1037.5,433.6L1038.1,433.8L1038.8,435.3L1039.4,435.0L1039.3,437.2L1040.1,434.4L1040.9,437.2L1040.7,436.6L1041.4,438.3L1042.0,438.1L1042.7,439.4L1043.7,439.6L1044.7,439.0L1045.7,439.5L1046.8,439.1L1047.8,439.6L1048.8,438.9L1049.8,439.7L1050.8,439.0L1051.8,439.3L1052.9,438.8L1053.9,439.5L1054.9,438.8L1055.9,439.4L1056.9,438.7L1057.9,439.2L1058.9,438.6L1060.0,439.4L1061.0,438.6L1062.0,439.2L1063.0,438.6L1064.0,439.3L1065.0,438.6L1066.1,439.1L1067.1,438.7L1068.1,439.1L1069.1,438.5L1070.1,439.1L1071.1,438.5L1072.1,438.9L1073.2,438.5L1074.2,439.1L1075.2,438.4L1076.2,438.9L1077.2,438.3L1078.2,438.8L1079.2,438.5L1080.3,438.7L1081.3,438.2L1082.3,438.9L1083.3,438.3L1084.3,438.8L1085.3,438.3L1086.4,438.9L1087.4,438.1L1088.4,438.6L1089.4,438.4L1090.2,438.3L1091.0,440.2L1091.8,440.0L1092.6,441.4L1093.4,441.2L1094.2,442.8L1095.0,442.5L1095.8,444.3L1096.6,443.7L1097.4,445.5L1098.2,444.8L1099.0,446.2L1100.0,446.7L1101.0,446.2L1102.0,447.2L1103.0,446.5L1104.0,447.5L1105.0,446.8L1106.0,447.6L1107.0,447.2L1108.0,448.1L1109.0,447.5L1110.0,448.1L1111.0,449.0L1112.0,448.4L1112.9,449.6L1113.9,449.0L1114.3,450.1L1114.9,448.2L1115.4,450.1L1115.8,449.7L1116.8,450.8L1117.8,450.2L1118.8,451.2L1119.8,451.0L1120.7,452.0L1121.7,452.0L1122.7,451.9L1123.8,452.4L1124.8,452.1L1125.9,452.6L1126.9,451.9L1128.0,452.8L1129.0,452.3L1130.1,452.8L1131.1,452.3L1132.2,453.1L1133.2,452.6L1134.3,453.2L1135.3,453.0L1136.2,453.0L1137.1,454.6L1137.9,454.2L1138.8,455.8L1139.7,455.7L1140.6,457.2L1141.5,457.0L1142.4,458.4L1143.2,458.3L1144.1,459.8L1145.0,459.8L1146.0,459.4L1147.1,460.1L1148.1,459.5L1149.1,459.8L1150.2,459.3L1151.2,459.8L1151.6,459.2L1152.2,457.1L1152.9,459.2L1153.3,459.8L1154.3,459.1L1155.4,459.9L1156.4,459.2L1157.4,459.6L1158.5,459.1L1159.5,459.8L1160.5,459.0L1161.6,459.5L1162.6,459.3L1163.5,459.5L1164.4,460.5L1165.3,460.4L1166.2,461.5L1167.1,461.2L1167.9,462.6L1168.8,462.2L1169.7,463.7L1170.6,463.4L1171.5,464.4L1172.4,464.7L1173.5,464.4L1174.5,464.8L1175.6,464.0L1176.6,464.7L1177.7,463.8L1178.7,464.4L1179.1,463.9L1179.8,462.1L1180.4,463.9L1180.8,464.4L1181.9,463.5L1182.9,464.1L1184.0,463.7L1185.0,463.7L1186.0,464.7L1186.9,464.4L1187.9,465.4L1188.9,464.7L1189.8,465.8L1190.8,465.3L1191.8,466.3L1192.8,466.0L1193.8,466.9L1194.7,466.7L1195.7,467.6L1196.7,467.1L1197.7,468.1L1198.6,467.7L1199.6,468.7L1199.9,468.3L1200.6,470.5L1201.2,468.3L1201.5,469.5L1202.5,469.0L1203.5,469.6L1204.5,470.2L1205.5,469.5L1206.5,470.3L1207.5,469.9L1208.6,470.8L1209.6,470.3L1210.6,471.2L1211.6,470.8L1212.6,471.5L1213.6,471.0L1214.6,471.8L1215.6,471.5L1216.6,472.1L1217.7,471.6L1218.7,472.5L1219.7,472.3L1220.1,472.9L1220.7,471.3L1221.2,472.9L1221.0,472.6L1221.7,474.8L1222.4,472.6L1222.7,473.2L1223.7,472.9L1224.7,473.6L1225.7,473.1L1226.8,474.0L1227.8,473.4L1228.8,474.5L1229.8,473.8L1230.8,474.4L1231.8,475.0L1232.8,474.5L1232.8,475.3L1233.7,477.8L1234.6,475.3L1234.7,475.2L1235.7,476.0L1236.7,475.5L1237.6,476.3L1238.6,475.9L1239.6,476.9L1240.5,476.3L1241.5,477.6L1242.5,477.1L1243.5,477.8L1244.5,477.4L1245.4,478.3L1246.4,478.3L1246.8,478.9L1247.3,480.9L1247.7,480.6L1248.2,482.6L1248.6,482.0L1249.1,484.3L1249.5,484.0L1250.0,485.9L1250.4,486.1L1250.9,487.8L1251.3,487.9L1251.8,489.5L1252.2,490.0L1253.0,488.8L1253.7,489.1L1253.5,487.3L1254.5,489.8L1255.4,487.3L1255.2,487.6L1256.0,486.1L1256.7,486.7L1257.3,488.4L1258.0,488.2L1258.7,490.0L1259.3,490.0L1260.0,491.7L1260.7,491.7L1261.3,494.0L1262.0,494.0L1263.0,494.0L1264.1,494.8L1265.1,494.0L1266.2,495.0L1267.2,494.4L1267.8,495.1L1268.3,493.8L1268.7,495.1L1269.3,494.6L1270.0,495.3L1270.4,494.0L1270.7,495.3L1271.4,494.9L1272.5,495.6L1273.5,495.2L1274.6,496.0L1275.6,495.9L1276.4,495.8L1277.2,497.8L1278.0,497.6L1278.9,498.9L1279.7,498.8L1280.5,500.4L1280.3,499.7L1281.3,496.5L1282.4,499.7L1282.1,501.5L1283.0,501.0L1283.8,502.7L1284.6,502.7L1285.4,503.7L1286.4,504.1L1287.4,503.8L1288.5,504.3L1289.5,503.9L1290.5,504.6L1291.5,504.1L1292.5,504.8L1293.6,504.6L1294.6,505.3L1295.6,504.8L1296.6,505.6L1297.6,505.1L1298.6,505.7L1299.7,505.3L1300.7,506.1L1301.7,505.6L1302.7,506.4L1303.7,506.0L1304.8,506.7L1305.8,506.2L1306.8,506.6L1307.8,506.9L1308.8,506.5L1309.2,507.1L1309.9,509.4L1310.5,507.1L1310.9,506.7L1311.9,507.5L1312.9,506.9L1313.9,507.4L1315.0,507.1L1316.0,507.7L1317.0,507.1L1318.0,508.0L1319.0,507.3L1320.0,508.2L1321.1,507.5L1322.1,508.3L1323.1,507.7L1324.1,508.5L1325.1,507.9L1326.2,508.7L1327.2,508.3L1328.2,508.5L1329.0,509.8L1329.9,509.4L1330.7,511.2L1331.5,510.5L1331.4,512.4L1332.3,509.3L1333.3,512.4L1333.2,512.0L1334.0,513.4L1335.1,513.6L1336.1,513.0L1337.2,513.8L1338.3,513.1L1339.4,513.6L1340.4,513.2L1341.5,513.7L1342.6,513.1L1343.7,513.8L1344.7,513.1L1345.8,513.4L1346.8,514.4L1347.8,513.8L1348.7,515.2L1348.9,514.8L1349.7,517.2L1350.5,514.8L1350.7,516.1L1351.6,515.8L1352.6,517.5L1353.6,517.3L1354.6,517.0L1355.6,517.7L1356.7,517.2L1357.7,518.0L1358.7,517.6L1359.7,518.4L1360.8,517.9L1361.8,518.4L1362.8,517.9L1363.8,518.7L1364.9,518.4L1365.9,519.0L1366.9,518.5L1367.9,519.4L1368.6,518.8L1369.0,517.6L1369.3,518.8L1370.0,519.6L1371.0,519.3L1372.0,519.4L1373.0,520.7L1373.3,520.1L1373.9,518.1L1374.6,520.1L1374.9,521.6L1375.9,521.5L1376.9,522.7L1377.9,522.4L1378.8,523.4L1379.8,523.4L1380.8,524.1L1381.8,524.6L1382.8,524.1L1383.9,525.1L1384.9,524.4L1385.9,525.5L1386.9,525.1L1388.0,526.1L1389.0,525.6L1390.0,526.0L1391.0,526.4L1392.1,526.1L1393.1,526.8L1394.1,526.2L1395.1,527.0L1396.2,526.6L1397.2,527.2L1398.2,526.7L1399.2,527.6L1400.3,527.1L1400.5,527.8L1401.3,525.5L1402.1,527.8L1402.3,527.2L1403.3,528.1L1404.4,527.5L1405.4,528.5L1406.0,528.0L1406.4,529.2L1406.8,528.0L1407.4,528.8L1408.5,528.0L1409.5,528.6L1410.6,529.0L1411.6,528.5L1412.7,528.9L1413.8,528.4L1414.8,529.1L1415.9,528.5L1416.9,529.2L1418.0,528.6L1419.1,529.2L1420.1,528.7L1421.2,529.0L1422.2,529.6L1423.1,529.2L1424.1,530.3L1425.1,529.8L1426.1,530.9L1427.0,530.2L1428.0,531.1L1429.0,530.9L1429.9,532.0L1430.2,531.3L1430.9,533.7L1431.6,531.3L1431.9,532.5L1432.9,531.9L1433.8,532.9L1434.8,532.9L1435.1,531.3L1435.5,531.4L1435.8,529.5L1435.5,529.8L1436.1,527.7L1436.7,529.8L1436.5,527.4L1436.8,527.0L1437.0,528.7L1436.5,528.4L1437.2,530.6L1437.9,528.4L1437.4,530.5L1437.6,530.2L1437.8,532.8L1437.3,532.6L1438.0,535.3L1438.8,532.6L1438.2,534.9L1438.4,534.5L1438.6,537.1L1438.9,536.9L1439.1,538.9L1439.3,538.6L1439.5,541.2L1439.7,540.9L1439.9,542.8L1440.1,542.6L1439.5,544.7L1440.3,547.0L1441.1,544.7L1440.5,544.7L1440.7,546.5L1441.0,545.9L1441.3,544.3L1441.7,544.2L1442.0,541.9L1442.3,542.1L1442.6,540.7L1443.7,540.5L1444.7,541.2L1445.8,540.7L1446.4,541.3L1446.9,542.9L1447.4,541.3L1447.9,540.7L1449.0,541.5L1450.0,541.2L1451.1,541.8L1452.2,541.2L1453.2,542.0L1454.3,541.7L1455.3,541.6L1456.2,542.8L1457.2,542.2L1458.2,543.3L1459.2,542.8L1460.1,543.8L1461.1,543.6L1462.1,544.3L1463.1,544.0L1464.0,545.2L1464.4,544.9L1465.0,546.9L1465.6,544.9L1466.0,545.8L1466.9,545.2L1467.9,546.4L1468.9,545.9L1469.9,547.0L1470.8,546.8L1471.8,547.5L1472.8,547.1L1473.8,548.2L1474.7,548.0L1475.7,548.5L1476.7,548.7L1477.7,548.4L1478.7,548.9L1479.7,548.4L1480.7,549.0L1481.8,548.6L1482.8,549.3L1483.8,548.6L1484.8,549.3L1485.8,548.7L1486.8,549.5L1487.8,549.1L1488.8,549.5L1489.8,549.0L1490.8,549.7L1491.9,549.3L1492.9,549.7L1493.9,549.3L1494.9,550.1L1495.9,549.3L1496.9,550.0L1497.9,549.5L1498.9,550.1L1499.9,549.7L1500.9,550.4L1502.0,549.9L1503.0,550.5L1504.0,549.9L1505.0,550.6L1506.0,549.9L1507.0,550.4L1508.0,550.9L1509.0,550.3L1510.0,551.1L1511.0,550.6L1512.0,551.5L1513.0,551.0L1514.0,551.5L1515.0,551.2L1516.0,551.8L1517.0,551.5L1517.5,552.2L1518.0,550.6L1518.4,552.2L1519.0,551.7L1520.0,552.2L1521.0,551.8L1522.0,552.4L1523.0,552.3L1524.0,552.9L1525.0,552.4L1526.0,553.2L1526.9,552.6L1527.9,553.3L1528.9,552.9L1529.9,553.6L1530.3,553.1L1530.9,555.3L1531.6,553.1L1531.9,553.8L1532.9,553.3L1533.9,554.1L1534.9,553.6L1535.9,554.5L1536.9,553.8L1537.9,554.5L1538.9,554.0L1539.9,554.8L1540.9,554.4L1541.9,555.0L1542.9,554.5L1543.2,555.2L1543.9,557.4L1544.6,555.2L1544.9,555.0L1545.9,555.3L1546.9,555.5L1547.9,555.1L1548.9,555.6L1549.9,555.3L1550.9,555.6L1551.9,555.2L1552.9,555.7L1553.9,555.4L1554.9,555.8L1555.9,555.5L1556.9,556.0L1557.9,555.3L1558.9,556.1L1559.9,555.5L1560.9,556.2L1561.9,555.5L1562.9,556.1L1563.9,555.7L1564.9,556.2L1565.9,555.7L1566.9,556.4L1567.9,555.8L1568.9,556.4L1569.9,555.9L1570.9,556.5L1571.9,556.0L1572.4,556.6L1572.9,555.1L1573.4,556.6L1573.9,556.1L1574.9,556.7L1575.9,556.0L1576.9,556.7L1577.9,556.2L1578.9,556.9L1579.9,556.1L1580.9,556.7L1581.9,556.2L1582.9,556.8L1583.9,556.3L1584.9,556.7L1585.9,557.1L1586.9,556.6L1588.0,557.0L1588.3,556.6L1589.0,554.5L1589.7,556.6L1590.0,557.3L1591.0,556.6L1592.1,557.3L1593.1,556.6L1594.1,557.4L1595.1,556.8L1596.2,557.3L1597.2,556.9L1598.2,557.4L1599.2,557.0L1600.3,557.7L1601.3,557.0L1602.3,557.7L1603.3,557.0L1604.3,557.8L1605.4,557.3L1606.4,557.8L1607.4,557.3L1608.4,558.0L1609.5,557.3L1610.5,558.1L1611.5,557.5L1612.5,558.0L1613.6,557.6L1614.6,558.1L1615.6,557.7L1616.6,558.4L1617.7,557.6L1618.7,558.3L1619.7,557.9L1620.7,558.4L1621.8,557.9L1622.8,558.3L1623.8,558.2L1624.8,557.8L1625.8,558.6L1626.8,558.1L1627.8,558.8L1628.8,558.3L1629.8,559.0L1630.8,558.2L1631.8,559.1L1632.8,558.4L1633.9,559.3L1634.9,558.5L1635.9,559.2L1636.9,558.7L1637.9,559.4L1638.9,558.7L1639.9,559.3L1640.9,558.9L1641.9,559.7L1642.9,559.0L1643.9,559.9L1644.9,559.2L1645.9,560.0L1646.9,559.5L1647.9,559.9L1648.9,559.4L1649.9,560.2L1650.9,559.6L1651.9,560.1L1653.0,559.7L1654.0,560.2L1655.0,559.9L1656.0,560.6L1657.0,559.9L1658.0,560.7L1659.0,560.2L1660.0,560.8L1661.0,560.2L1662.0,560.6" stroke="#9c1fa0" stroke-width="3.6" fill="none" stroke-linejoin="miter" stroke-miterlimit="4"/>
<path d="M599.6,352.0L601.0,385.8L601.6,352.0L601.6,385.8L602.7,385.0L603.8,385.1L604.9,383.8L606.0,383.8L606.3,385.0L606.7,385.3L607.0,387.6L607.3,386.9L607.7,389.3L608.0,389.0L608.3,391.2L607.6,391.0L608.7,394.1L609.7,391.0L609.0,392.6L609.7,392.2L610.5,390.6L611.2,391.2L611.9,388.9L612.6,389.7L613.3,387.4L614.1,387.8L614.8,386.8L615.7,386.0L616.6,386.2L617.6,384.9L618.5,385.1L619.4,383.7L620.3,384.3L621.2,382.5L622.1,383.3L623.1,381.9L624.0,382.3L624.9,380.6L625.8,380.9L626.7,379.6L627.6,379.8L628.6,378.4L629.5,379.1L630.4,378.0L631.0,378.5L631.7,380.4L632.3,380.2L633.0,381.6L633.6,381.6L634.3,382.9L635.3,383.0L636.2,381.3L637.2,381.7L638.2,380.7L639.2,380.8L639.3,379.7L640.1,377.0L641.0,379.7L641.1,380.1L642.1,379.0L642.6,379.4L643.1,381.6L643.6,381.3L644.1,383.7L644.5,383.3L645.0,385.2L645.5,384.9L645.2,387.4L646.0,390.0L646.9,387.4L646.5,387.1L647.0,388.7L648.0,388.6L648.9,387.8L649.9,388.2L650.5,387.2L650.9,386.0L651.3,387.2L651.9,387.6L652.8,386.7L653.8,387.1L654.8,386.2L655.8,386.6L656.0,385.6L656.7,387.5L657.4,385.6L657.7,386.0L658.7,385.2L659.6,385.5L660.6,384.7L661.6,385.0L662.6,384.1L663.5,384.4L664.5,383.4L665.5,383.9L666.4,383.1L667.4,383.3L668.4,382.3L669.4,382.8L670.3,381.8L671.3,382.3L672.3,381.4L673.3,381.7L674.2,380.8L675.2,380.9L675.9,382.1L675.4,382.0L676.7,378.6L677.9,382.0L677.4,383.6L678.1,383.8L679.1,383.1L680.1,383.8L681.0,382.7L682.0,383.1L683.0,382.4L684.0,382.8L684.9,381.7L685.9,382.4L686.9,381.2L687.9,381.9L688.8,381.1L689.8,381.2L690.8,380.3L691.8,380.8L692.7,379.9L693.7,380.3L694.7,379.5L695.7,379.9L696.6,379.0L697.6,379.3L698.6,378.4L698.8,379.1L699.6,381.1L700.3,379.1L700.5,378.1L701.5,378.5L702.5,377.6L703.5,377.8L704.4,377.2L705.4,377.4L706.4,376.5L707.4,377.1L708.3,376.2L709.3,376.7L710.3,375.7L711.3,376.1L712.2,375.2L713.2,375.6L714.2,375.1L715.0,375.5L715.9,377.1L716.7,376.7L717.5,378.5L718.3,378.2L719.2,379.9L720.0,380.0L721.1,379.5L722.2,380.0L723.3,379.3L724.4,379.8L725.4,379.0L726.5,379.6L727.6,378.8L728.7,379.4L729.8,379.0L730.8,378.8L731.8,380.1L732.7,379.5L733.7,380.6L734.2,380.1L734.7,381.5L735.2,380.1L735.6,381.0L736.6,380.6L737.6,381.6L738.6,381.5L739.5,382.4L740.5,381.8L740.8,383.1L741.5,380.8L742.2,383.1L742.5,382.7L743.4,383.7L744.4,383.2L745.4,383.8L746.4,384.5L747.4,384.1L748.3,384.9L749.3,384.5L750.3,385.3L751.2,385.0L752.2,385.9L753.2,385.4L754.2,386.2L755.1,385.8L756.1,386.8L757.1,386.3L758.1,387.2L759.0,386.8L760.0,387.8L761.0,387.3L762.0,388.2L762.9,387.8L763.9,388.7L764.9,388.7L766.0,388.4L767.1,389.4L768.2,388.7L769.3,389.5L770.4,389.3L771.5,389.8L772.6,389.7L773.6,389.3L774.6,389.8L775.6,388.8L776.6,389.5L777.6,388.6L778.6,389.2L779.6,388.4L780.6,388.9L781.6,388.1L782.6,388.6L783.6,387.9L784.6,388.6L785.6,387.8L786.6,388.1L787.6,387.4L788.6,388.0L789.6,387.0L790.6,387.6L791.6,387.0L792.6,387.5L793.6,386.7L794.1,387.2L794.6,388.6L795.0,387.2L795.5,386.5L796.5,387.0L797.5,386.1L798.5,386.5L799.5,386.0L800.5,386.5L801.5,385.4L802.5,386.2L803.5,385.4L804.5,385.9L805.5,385.1L806.5,385.7L807.5,384.8L808.5,385.3L809.5,384.5L810.5,385.1L811.5,384.2L812.5,384.7L813.5,384.0L814.5,384.6L815.5,383.8L816.5,384.3L817.5,383.8L818.5,383.6L819.5,384.6L820.4,384.4L821.4,385.2L822.4,384.6L823.3,385.6L823.8,385.1L824.3,383.2L824.9,385.1L825.3,385.8L826.3,386.0L827.3,385.3L828.4,385.9L829.4,385.0L830.4,385.5L831.4,385.0L832.4,385.4L833.5,384.8L834.5,385.2L835.5,384.4L836.5,384.8L837.6,384.3L838.6,384.8L839.6,384.1L840.6,384.4L841.6,383.7L842.7,384.3L843.7,383.6L844.7,383.8L845.8,384.6L846.8,384.1L847.9,385.0L848.2,384.5L848.9,386.8L849.7,384.5L850.0,385.2L851.0,385.4L852.0,384.8L853.0,385.0L854.1,384.4L855.1,385.0L856.1,384.1L857.1,384.9L858.1,384.2L859.1,384.5L860.1,383.8L861.1,384.3L862.2,383.6L863.2,384.2L864.2,383.3L865.2,384.0L866.2,383.1L867.2,383.8L868.2,382.9L869.3,383.3L870.3,382.9L871.3,383.1L872.3,382.5L873.3,383.0L874.3,382.4L875.3,382.9L876.4,382.2L877.4,382.7L878.4,381.9L879.4,382.4L880.4,381.9L881.4,382.3L882.4,381.5L883.5,381.9L884.5,381.3L885.5,381.6L886.5,381.2L887.0,381.4L887.5,379.8L888.0,381.4L888.5,381.0L888.8,381.3L889.5,383.7L890.2,381.3L890.5,380.6L891.6,381.2L892.6,380.5L893.6,381.0L894.6,380.5L895.6,380.0L896.6,380.8L897.7,380.1L898.7,380.6L899.7,379.9L900.7,380.4L901.5,379.7L901.7,380.6L902.0,379.7L902.8,380.1L903.8,379.5L904.8,380.0L905.8,379.4L906.8,380.1L907.8,379.4L908.9,379.8L909.9,379.3L910.9,379.8L911.9,379.0L912.9,379.6L914.0,379.0L915.0,379.4L916.0,379.0L916.6,379.2L917.3,381.1L918.0,381.0L918.6,382.8L919.2,382.6L919.9,383.8L921.0,384.0L922.1,383.3L923.1,383.7L924.2,383.3L925.3,383.7L926.4,383.0L927.4,383.5L928.5,382.6L929.6,382.9L930.6,383.9L931.5,383.5L931.8,385.0L932.5,387.1L933.3,385.0L933.5,385.2L934.5,384.9L935.6,385.4L936.6,385.1L937.6,385.5L938.2,385.0L938.6,386.2L939.1,385.0L939.7,385.7L940.7,385.1L941.7,385.8L942.7,385.3L943.8,385.7L944.8,385.4L945.8,386.0L946.8,385.2L947.9,385.9L948.9,385.3L949.9,386.0L950.9,385.3L952.0,386.1L953.0,385.8L954.0,385.8L955.0,386.7L955.9,386.3L956.9,386.8L957.9,387.0L958.9,386.6L959.9,387.0L960.9,386.3L961.9,386.9L962.9,386.2L963.9,386.8L964.9,386.2L965.9,386.6L966.9,386.2L967.9,386.7L968.9,385.9L969.9,386.7L970.9,386.0L971.9,386.6L972.9,385.9L973.9,386.4L974.9,385.6L975.9,386.4L976.9,385.8L977.9,386.2L978.9,385.6L979.9,386.2L980.9,385.6L981.9,386.1L982.9,385.5L983.9,385.9L984.9,385.5L985.9,386.0L986.9,385.1L987.9,385.9L988.9,385.3L989.9,385.7L990.9,385.1L991.9,385.8L992.9,385.0L993.9,385.7L994.9,385.0L995.9,385.2L997.0,385.6L998.1,385.3L999.1,386.1L1000.2,385.9L1001.3,386.7L1002.4,386.2L1003.4,387.0L1004.5,386.9L1005.6,387.3L1006.6,387.5L1007.6,387.0L1008.7,387.4L1009.7,386.8L1010.7,387.4L1011.7,386.9L1012.7,387.4L1013.8,386.7L1014.8,387.2L1015.8,386.7L1016.8,387.4L1017.9,386.8L1018.9,387.1L1019.9,386.5L1020.9,387.2L1021.9,386.5L1023.0,387.2L1024.0,386.5L1025.0,386.8L1026.0,387.9L1027.0,388.3L1028.0,387.7L1029.1,388.4L1030.1,387.7L1031.2,388.2L1032.2,387.6L1033.2,388.0L1034.3,387.2L1035.3,387.9L1036.4,387.3L1037.4,387.6L1038.4,387.0L1039.5,387.5L1040.5,386.6L1041.6,387.2L1042.6,386.8L1043.6,386.7L1044.6,388.0L1045.5,388.0L1046.5,389.3L1047.5,388.9L1048.5,389.7L1049.6,390.0L1050.7,389.2L1051.7,389.5L1052.8,388.8L1053.9,389.4L1055.0,388.9L1056.0,389.3L1057.1,388.5L1058.2,388.7L1059.2,389.2L1060.2,388.9L1061.1,390.1L1062.1,389.9L1063.1,390.7L1064.0,390.3L1065.0,391.8L1066.0,391.6L1067.1,391.2L1068.1,392.0L1069.2,391.6L1070.2,392.0L1071.3,391.4L1072.3,392.0L1073.4,391.6L1074.4,392.1L1075.5,391.6L1076.5,392.2L1077.6,391.9L1078.6,392.6L1079.7,392.2L1080.3,392.6L1080.9,394.7L1081.4,394.2L1082.0,396.3L1082.6,395.6L1083.2,397.4L1083.8,397.2L1084.3,399.4L1084.9,399.0L1085.5,400.4L1086.5,400.5L1087.5,399.7L1088.4,400.2L1089.4,399.2L1090.4,399.7L1091.3,398.7L1092.3,398.9L1093.3,398.5L1094.3,398.6L1094.3,399.7L1095.2,397.0L1096.2,399.7L1096.2,399.5L1097.2,401.0L1098.1,400.5L1099.1,401.7L1100.0,401.6L1101.0,402.4L1102.0,402.8L1103.0,402.3L1104.0,403.2L1105.0,402.4L1106.0,403.1L1107.0,402.8L1108.0,403.4L1109.0,402.9L1110.0,403.5L1111.0,403.1L1112.0,403.8L1113.0,403.1L1114.0,404.0L1115.0,403.6L1116.0,404.3L1117.0,403.8L1118.0,404.4L1119.0,403.9L1120.0,404.3L1121.1,404.5L1122.1,403.8L1123.2,404.3L1124.2,403.6L1125.3,404.0L1126.3,403.3L1127.4,403.9L1128.4,403.2L1129.5,403.3L1130.5,404.1L1131.4,403.9L1131.7,404.8L1132.4,406.9L1133.2,404.8L1133.4,404.4L1134.3,405.8L1135.3,405.3L1136.3,406.3L1137.3,406.1L1138.2,407.4L1139.2,407.2L1140.2,407.1L1141.3,407.7L1142.3,407.3L1143.4,407.6L1144.4,407.3L1145.4,407.9L1146.5,407.4L1147.5,408.1L1148.6,407.6L1149.6,408.2L1150.6,407.7L1151.7,408.4L1152.7,407.9L1153.8,408.4L1154.8,408.2L1155.8,408.0L1156.8,409.1L1157.7,408.6L1158.7,409.7L1158.8,409.2L1159.7,406.7L1160.5,409.2L1160.6,410.1L1161.6,409.9L1162.6,410.9L1163.6,410.3L1164.5,411.5L1165.5,411.1L1166.5,411.9L1167.5,411.6L1168.5,412.7L1169.4,412.1L1170.4,413.1L1171.4,412.8L1172.3,413.7L1173.3,413.5L1174.3,414.0L1175.3,414.4L1176.3,413.6L1177.3,414.2L1178.3,413.9L1179.4,414.2L1180.4,413.6L1181.4,414.2L1182.4,413.8L1183.4,414.2L1184.4,413.8L1185.4,414.2L1186.4,413.7L1187.4,414.3L1188.5,413.7L1189.5,414.2L1190.5,413.8L1191.5,414.3L1192.5,413.7L1193.5,414.4L1194.5,413.7L1195.5,414.2L1196.5,413.7L1197.6,414.4L1198.6,413.8L1199.6,414.3L1200.6,413.7L1201.6,414.0L1202.6,414.7L1203.6,414.3L1204.7,415.2L1205.7,414.6L1206.7,415.5L1207.7,415.0L1208.8,415.9L1209.8,415.4L1210.8,416.4L1211.8,415.9L1212.9,417.1L1213.9,416.4L1214.9,417.2L1215.9,416.9L1217.0,417.9L1218.0,417.5L1219.0,418.0L1220.0,418.4L1221.1,418.0L1222.1,418.5L1223.1,418.1L1224.2,418.6L1225.2,418.2L1226.2,418.7L1227.3,418.4L1228.3,418.9L1229.3,418.5L1230.3,419.3L1231.4,418.7L1232.4,419.3L1233.4,418.7L1234.5,419.6L1235.5,419.0L1236.5,419.8L1237.6,419.1L1238.6,419.5L1239.6,420.1L1240.5,419.6L1241.5,420.9L1242.5,420.6L1243.5,421.6L1244.4,421.1L1245.4,422.1L1246.4,421.9L1247.4,422.7L1248.3,422.4L1249.3,423.5L1250.3,423.4L1251.3,423.1L1252.3,424.0L1253.4,423.4L1254.4,424.0L1255.4,423.7L1256.4,424.1L1257.4,423.7L1258.5,424.5L1259.5,424.0L1260.5,424.6L1261.5,424.0L1262.5,424.7L1263.5,424.2L1264.6,425.0L1265.6,424.4L1266.6,425.2L1267.6,424.8L1268.6,425.5L1269.7,425.0L1270.7,425.6L1271.7,425.3L1272.8,425.0L1273.8,425.5L1274.4,424.8L1274.9,426.1L1275.3,424.8L1275.9,425.3L1277.0,424.9L1278.0,425.2L1279.1,424.8L1280.1,425.3L1281.2,424.7L1282.2,425.2L1283.3,424.6L1284.3,425.1L1285.4,424.8L1286.5,424.7L1287.5,425.5L1288.2,425.1L1288.6,426.1L1288.9,425.1L1289.6,425.8L1290.7,425.3L1291.7,426.2L1292.8,425.7L1293.8,426.4L1294.9,425.9L1295.9,426.7L1297.0,426.7L1298.0,426.4L1299.0,427.1L1300.0,426.4L1301.1,427.2L1302.1,426.8L1303.1,427.3L1304.1,426.6L1305.1,427.3L1306.1,427.0L1307.2,427.6L1308.2,427.1L1309.2,427.6L1310.2,427.1L1311.2,427.6L1312.2,427.3L1313.3,427.7L1314.3,427.4L1315.3,428.0L1316.3,427.3L1317.3,428.1L1318.3,427.5L1319.0,428.3L1319.4,427.3L1319.7,428.3L1320.4,427.6L1321.4,428.3L1322.4,428.0L1323.6,427.8L1324.7,428.4L1325.9,428.0L1327.0,428.9L1328.2,428.7L1328.9,428.9L1329.7,430.9L1330.4,430.3L1330.3,432.1L1331.1,429.7L1331.9,432.1L1331.8,431.9L1332.5,433.4L1333.3,433.2L1334.0,434.5L1335.0,435.2L1336.0,434.6L1336.9,435.3L1337.9,434.9L1338.9,435.9L1339.9,435.5L1340.9,436.1L1341.8,435.7L1342.8,436.5L1343.8,436.5L1344.9,436.3L1345.9,437.1L1347.0,436.7L1348.0,437.4L1349.1,436.8L1350.1,437.8L1351.2,437.1L1352.2,437.9L1353.3,437.4L1354.3,438.3L1355.4,437.9L1356.4,438.7L1357.5,438.4L1358.1,438.9L1358.8,440.9L1359.4,440.5L1360.1,442.7L1360.7,442.5L1361.4,444.1L1362.0,443.6L1362.7,445.6L1363.3,446.2L1364.3,446.0L1365.4,446.6L1366.4,445.8L1367.5,446.4L1368.5,445.9L1369.5,446.4L1370.6,446.0L1371.6,446.6L1372.7,445.8L1373.7,446.4L1374.7,446.0L1375.8,446.6L1376.8,445.9L1377.9,446.5L1378.9,446.2L1379.8,446.0L1380.8,447.3L1381.7,447.1L1382.6,448.1L1383.5,448.0L1384.5,449.0L1385.4,448.5L1386.3,449.7L1386.4,449.4L1387.2,452.0L1388.0,449.4L1388.2,450.5L1389.1,450.3L1390.0,451.0L1390.8,452.2L1391.7,452.0L1392.5,453.8L1393.3,453.2L1394.1,454.9L1395.0,454.6L1395.8,456.0L1396.8,456.4L1397.8,455.8L1398.8,456.6L1399.8,456.3L1400.8,456.8L1401.8,456.4L1402.9,457.1L1403.9,456.4L1404.9,457.4L1405.9,456.7L1406.9,457.3L1407.9,456.9L1408.9,457.8L1409.9,457.3L1410.9,457.8L1411.9,457.4L1412.9,458.2L1413.9,457.6L1414.9,458.4L1415.9,457.7L1417.0,458.4L1418.0,458.1L1419.0,458.6L1420.0,458.2L1421.0,459.0L1422.0,458.6L1423.0,458.9L1423.7,460.4L1424.5,459.8L1425.2,461.5L1425.9,461.5L1426.6,463.2L1427.4,463.3L1428.1,465.0L1428.8,464.6L1429.5,466.7L1430.3,466.0L1431.0,467.6L1432.0,468.1L1433.1,467.6L1434.1,468.6L1435.1,468.1L1436.1,469.0L1437.2,468.5L1438.2,469.4L1439.2,469.0L1440.3,470.0L1441.3,469.6L1442.3,470.3L1443.4,470.0L1444.4,471.1L1445.4,470.5L1446.4,471.4L1447.5,470.9L1448.5,471.5L1449.5,472.0L1450.6,471.6L1451.6,472.2L1452.6,472.0L1453.6,472.6L1454.7,472.2L1455.7,472.8L1456.3,472.4L1456.7,471.2L1457.1,472.4L1457.7,473.2L1458.8,472.8L1459.8,473.7L1460.8,473.2L1461.8,473.9L1462.9,473.3L1463.9,474.1L1464.9,473.7L1465.9,474.6L1467.0,474.1L1468.0,474.5L1469.0,475.0L1470.1,474.4L1471.1,475.0L1472.1,474.8L1473.2,475.6L1474.2,475.0L1475.2,475.7L1476.3,475.1L1477.3,476.1L1478.3,475.5L1479.4,476.3L1480.4,475.7L1481.4,476.4L1482.5,476.1L1483.5,476.4L1484.4,477.4L1485.3,476.8L1486.2,478.4L1487.1,477.9L1488.1,479.0L1489.0,478.9L1489.9,480.0L1490.8,479.5L1491.2,481.1L1491.7,482.9L1492.3,481.1L1492.6,480.5L1493.5,482.0L1494.4,481.4L1495.4,482.8L1496.3,482.3L1497.2,483.6L1498.1,483.4L1499.0,484.2L1499.9,485.0L1500.8,484.8L1501.7,486.3L1502.6,485.6L1503.4,487.4L1504.3,486.7L1505.2,488.6L1506.1,487.7L1507.0,489.0L1508.1,489.4L1509.2,488.8L1510.2,489.8L1511.3,489.0L1512.4,489.8L1513.5,489.3L1514.5,490.2L1515.6,489.5L1516.7,490.0L1517.5,491.0L1518.4,490.4L1519.2,492.1L1520.0,491.6L1520.8,493.5L1521.7,492.8L1522.5,494.0L1523.6,494.3L1524.7,493.7L1525.8,494.4L1527.0,493.8L1528.1,494.5L1529.2,493.6L1530.3,494.0L1531.2,494.9L1532.0,494.6L1532.9,496.4L1533.7,496.2L1534.6,497.7L1535.4,497.1L1536.3,499.3L1537.1,498.6L1538.0,499.8L1538.9,501.0L1539.1,500.0L1539.8,497.4L1540.5,500.0L1540.0,501.7L1540.7,499.6L1541.4,501.7L1541.6,501.2L1542.5,502.5L1542.7,502.0L1543.4,504.9L1544.2,502.0L1543.6,503.6L1544.4,501.4L1545.1,503.6L1545.3,502.9L1546.2,504.5L1547.1,503.7L1548.0,505.2L1548.4,504.4L1548.9,502.7L1549.4,504.4L1549.8,505.6L1550.9,505.9L1552.0,505.1L1553.0,506.2L1554.1,505.0L1555.2,505.9L1556.3,505.2L1557.3,505.8L1558.4,505.2L1559.5,505.6L1559.7,507.6L1559.0,506.9L1559.9,509.4L1560.8,506.9L1560.2,509.0L1560.4,508.7L1559.5,511.5L1560.6,508.2L1561.7,511.5L1560.0,510.9L1560.8,513.1L1561.6,510.9L1561.0,512.9L1561.2,512.4L1561.5,515.4L1561.7,514.4L1561.9,517.1L1561.3,517.0L1562.1,519.4L1562.9,517.0L1562.3,519.4L1562.5,518.4L1562.8,520.8L1563.0,520.2L1563.2,522.6L1563.4,523.2L1564.5,522.3L1565.5,523.2L1566.6,522.2L1567.7,522.8L1568.7,521.8L1569.8,522.1L1570.9,521.3L1571.9,522.1L1573.0,521.2L1573.9,521.1L1574.7,522.7L1575.6,522.4L1575.6,523.9L1576.5,526.8L1577.4,523.9L1576.7,523.3L1577.4,521.4L1578.0,523.3L1578.2,525.0L1579.1,523.9L1580.0,525.8L1580.8,525.4L1581.7,526.7L1582.6,526.3L1583.4,527.9L1584.3,527.4L1585.2,529.0L1586.1,528.1L1586.9,529.9L1587.8,529.1L1588.7,531.0L1589.5,530.1L1590.4,532.0L1591.3,531.3L1592.1,533.3L1592.2,532.0L1593.0,529.5L1593.9,532.0L1593.9,533.7L1594.8,532.9L1595.6,535.1L1596.5,534.9L1597.6,534.5L1598.6,535.4L1599.7,534.4L1600.8,535.3L1601.8,534.4L1602.1,535.6L1602.9,537.8L1603.6,535.6L1603.5,534.4L1603.9,533.3L1604.4,534.4L1605.0,535.6L1606.1,534.6L1607.1,535.4L1608.2,534.9L1608.9,535.0L1609.7,537.1L1609.6,536.0L1610.4,538.8L1611.2,536.0L1611.2,538.4L1611.9,537.5L1612.7,540.2L1612.4,539.3L1613.4,542.6L1614.4,539.3L1614.1,541.0L1614.9,540.7L1615.6,542.8L1616.4,541.6L1617.1,544.3L1617.9,543.1L1618.6,545.5L1619.3,544.5L1619.0,547.0L1620.1,550.0L1621.2,547.0L1620.8,546.2L1621.6,547.8L1621.5,547.3L1622.3,544.4L1623.1,547.3L1623.1,549.4L1623.8,549.5L1624.9,548.8L1626.0,549.9L1626.8,548.9L1627.1,547.9L1627.3,548.9L1628.2,549.9L1629.2,549.0L1630.3,550.0L1631.4,549.1L1632.5,550.2L1633.6,549.5L1634.4,549.7L1635.2,551.5L1635.9,550.6L1635.7,553.0L1636.7,556.2L1637.7,553.0L1637.5,552.6L1637.4,554.9L1638.3,557.6L1639.2,554.9L1639.1,553.7L1639.8,555.7L1640.6,554.8L1641.4,557.2L1641.2,556.8L1642.2,554.0L1643.2,556.8L1643.0,558.5L1643.7,558.3L1644.5,560.7L1645.3,560.2L1645.7,559.6L1646.3,561.7L1647.0,559.6L1647.4,561.0L1648.4,560.1L1649.4,561.2L1650.4,560.1L1651.5,561.0L1652.5,559.9L1653.5,561.3L1654.6,560.1L1655.6,561.3L1656.6,560.4L1657.7,561.7L1658.7,560.7L1659.7,561.5L1660.7,560.7L1661.8,561.6L1662.8,561.2" stroke="#cb4e80" stroke-width="3.6" fill="none" stroke-linejoin="miter" stroke-miterlimit="4"/>
<path d="M790.2,352.0L791.2,352.1L792.1,353.2L793.0,353.0L794.0,353.6L795.0,354.0L796.0,353.2L797.0,353.8L798.0,353.4L799.0,353.7L800.0,353.1L801.0,353.9L802.0,353.3L803.0,353.8L804.0,353.0L805.0,353.7L806.0,353.1L807.0,353.7L808.0,353.0L809.0,353.7L810.0,352.9L811.0,353.7L812.0,353.0L813.0,353.6L814.0,353.1L815.0,353.6L816.0,353.1L817.0,353.4L818.0,352.9L819.0,353.6L820.0,352.9L821.0,353.5L822.0,352.9L823.0,353.4L824.0,352.7L825.0,353.2L826.0,352.7L827.0,353.3L828.0,352.9L829.0,353.2L830.0,352.6L831.0,353.4L832.0,352.9L833.0,353.4L834.0,352.7L835.0,353.3L836.0,352.7L837.0,353.2L838.0,352.7L838.7,353.1L839.0,354.0L839.3,353.1L840.0,352.6L841.0,353.0L842.0,352.6L843.0,353.0L844.0,352.6L845.0,353.0L846.0,352.5L847.0,353.2L848.0,352.4L849.0,353.0L850.0,352.7L851.0,352.4L852.0,352.9L853.0,352.5L854.0,353.1L855.0,352.4L856.0,352.9L857.0,352.5L858.0,353.1L859.0,352.6L860.0,353.0L861.0,352.5L862.0,353.0L863.0,352.4L864.0,352.9L865.0,352.3L866.0,353.1L867.0,352.4L868.0,353.0L869.0,352.4L870.0,353.0L871.0,352.3L872.0,352.7L872.8,354.0L873.5,353.8L874.2,355.9L875.0,356.6L876.0,356.4L877.0,356.9L878.0,356.3L879.1,356.8L880.1,356.1L881.1,356.6L882.1,356.3L883.1,356.5L884.1,356.0L885.1,356.6L886.1,356.1L887.2,356.5L888.2,355.9L889.2,356.5L890.2,356.1L891.2,356.4L892.2,355.8L893.2,356.4L893.5,355.8L894.3,357.9L895.0,355.8L895.3,356.4L896.3,355.7L897.3,356.2L898.3,355.6L899.3,356.1L900.3,355.5L901.4,356.2L902.4,355.5L903.4,356.2L904.4,355.6L905.4,356.0L906.4,355.6L907.4,355.9L908.4,355.4L909.5,356.0L910.0,355.3L910.5,356.6L910.9,355.3L911.5,356.0L912.5,355.5L913.5,356.0L914.5,355.2L915.5,355.8L916.6,355.2L917.6,355.9L918.6,355.0L919.6,355.8L920.6,355.1L921.6,355.5L922.6,355.1L923.6,355.5L924.7,355.1L925.7,355.4L926.7,355.0L927.7,355.2L928.7,355.9L929.6,355.7L930.6,356.9L931.6,356.3L932.1,357.4L932.5,356.1L933.0,357.4L933.5,357.5L934.5,357.1L935.5,357.9L936.5,357.2L937.5,357.8L938.5,357.2L939.5,357.7L940.5,357.2L941.5,357.8L942.5,357.3L943.5,357.7L944.5,357.1L945.5,357.7L946.5,357.3L947.5,357.9L948.5,357.3L949.5,357.9L950.5,357.3L951.5,357.7L952.5,357.2L953.5,357.7L954.5,357.2L955.5,357.6L956.5,357.1L957.5,357.8L958.5,357.3L959.5,357.7L960.5,357.1L961.5,357.7L962.5,357.3L963.5,357.7L964.5,357.2L965.5,357.9L966.5,357.2L967.5,357.7L968.5,357.3L969.5,357.6L970.5,357.3L971.5,357.8L972.5,357.5L973.5,357.4L974.5,358.9L975.4,358.3L976.4,359.1L977.4,359.4L978.5,358.7L979.5,359.4L980.6,358.8L981.6,359.3L982.6,358.6L983.7,359.2L984.7,358.5L985.8,358.9L986.8,358.6L987.8,358.8L988.9,358.2L989.9,358.8L991.0,358.3L992.0,358.5L993.0,359.1L994.0,358.6L994.9,360.1L995.9,359.9L996.9,359.6L997.9,360.2L998.9,359.7L999.9,360.2L1000.9,359.5L1001.9,360.1L1002.9,359.4L1003.9,360.1L1004.9,359.5L1005.9,360.0L1006.9,359.3L1007.9,360.0L1008.9,359.3L1009.9,359.9L1010.9,359.1L1011.9,359.7L1013.0,359.2L1014.0,359.8L1015.0,359.2L1016.0,359.8L1017.0,359.1L1018.0,359.8L1018.3,359.1L1019.0,357.0L1019.7,359.1L1020.0,359.5L1021.0,359.2L1022.0,359.4L1023.0,358.8L1024.0,359.6L1025.0,359.0L1026.0,359.3L1027.0,358.7L1028.0,359.5L1029.0,359.1L1030.0,359.1L1031.0,360.7L1030.9,360.5L1032.0,363.3L1033.0,360.5L1032.9,361.9L1033.9,361.4L1034.9,362.4L1035.9,362.6L1036.9,362.2L1038.0,362.6L1039.0,362.2L1040.0,362.6L1041.0,362.3L1042.1,362.7L1043.1,362.3L1044.1,362.9L1045.1,362.3L1046.2,362.8L1047.2,362.2L1048.2,362.8L1049.2,362.5L1050.3,362.9L1051.3,362.3L1052.3,362.8L1053.3,362.5L1054.3,362.8L1055.4,362.5L1056.4,362.9L1057.4,362.5L1058.4,363.1L1059.5,362.4L1060.5,363.0L1061.5,362.4L1062.5,363.2L1063.6,362.4L1064.6,363.2L1065.6,362.7L1066.6,363.1L1067.7,362.6L1068.7,363.2L1069.7,362.6L1070.7,363.1L1071.8,362.8L1072.8,363.3L1073.8,363.0L1074.8,362.7L1075.9,363.4L1076.9,362.8L1077.9,363.5L1078.9,363.2L1080.0,363.6L1081.0,363.1L1082.0,363.9L1083.0,363.4L1084.1,364.0L1085.1,363.6L1086.1,364.1L1087.1,363.8L1088.2,364.4L1089.2,363.8L1090.2,364.4L1091.2,363.8L1092.3,364.8L1093.3,364.4L1094.3,364.2L1095.4,364.7L1096.4,364.1L1097.4,364.7L1098.4,364.3L1099.5,364.7L1100.5,364.3L1101.5,364.9L1102.5,364.3L1103.6,364.9L1104.6,364.2L1105.6,364.9L1106.7,364.4L1107.7,365.1L1108.7,364.4L1109.7,365.1L1110.8,364.3L1111.8,365.1L1112.8,364.6L1113.8,365.2L1114.9,364.4L1115.9,365.1L1116.9,364.6L1117.9,365.1L1119.0,364.7L1120.0,364.9L1121.0,365.1L1122.0,364.4L1123.0,365.0L1124.0,364.7L1125.1,365.2L1126.1,364.6L1127.1,364.9L1128.1,364.3L1129.1,365.0L1130.1,364.3L1131.1,365.0L1131.9,364.2L1132.1,365.0L1132.4,364.2L1133.1,364.8L1134.1,364.2L1135.2,364.8L1136.2,364.2L1137.2,364.6L1138.2,364.3L1139.2,364.4L1140.2,365.4L1141.1,365.0L1142.0,366.3L1143.0,366.3L1144.0,366.0L1145.0,366.8L1146.1,366.1L1147.1,366.7L1148.1,366.3L1149.1,366.8L1150.1,366.4L1151.2,366.8L1152.2,366.3L1153.2,367.0L1154.2,366.5L1155.2,367.1L1156.3,366.4L1157.3,367.1L1158.3,366.7L1159.3,367.2L1160.3,366.7L1161.4,367.3L1162.4,366.8L1163.4,367.5L1164.4,366.8L1165.4,367.3L1165.9,367.1L1166.5,364.9L1167.0,367.1L1167.5,367.6L1168.5,367.3L1169.5,367.4L1170.5,368.5L1171.4,368.2L1172.4,369.4L1173.4,369.0L1173.5,370.1L1174.3,367.3L1175.2,370.1L1175.3,369.9L1176.3,370.8L1177.3,371.0L1177.8,370.5L1178.3,369.1L1178.8,370.5L1179.3,371.1L1180.3,370.5L1181.3,371.0L1182.3,370.6L1183.4,370.9L1184.4,370.6L1185.4,371.1L1186.4,370.4L1187.4,371.1L1188.4,370.6L1189.4,371.0L1190.4,370.4L1191.4,371.2L1192.4,370.5L1193.4,371.2L1194.4,370.5L1195.4,371.0L1196.4,370.7L1197.5,371.1L1198.5,370.6L1199.5,371.1L1200.5,370.6L1201.5,371.0L1202.5,370.6L1203.5,370.8L1204.5,371.1L1205.5,370.8L1206.5,371.8L1207.5,371.4L1208.6,372.0L1209.6,371.6L1210.6,372.6L1211.6,371.9L1212.6,373.0L1213.6,372.5L1214.6,373.3L1215.6,372.6L1216.6,373.7L1217.7,373.1L1218.7,374.1L1219.7,373.7L1220.7,374.5L1221.7,374.1L1222.7,374.9L1223.7,374.2L1224.7,375.2L1225.7,374.9L1226.8,375.5L1227.8,375.0L1228.8,376.0L1229.8,375.4L1230.8,376.0L1231.7,376.6L1232.7,376.3L1233.6,377.5L1234.5,377.4L1235.5,378.6L1236.4,378.0L1237.3,379.4L1238.2,379.1L1239.2,380.4L1240.1,379.8L1241.0,381.0L1242.0,380.8L1242.9,381.9L1243.8,381.4L1244.8,383.0L1245.7,382.3L1246.6,383.7L1247.5,383.1L1248.5,384.3L1249.4,384.3L1250.3,385.5L1251.3,384.8L1252.2,385.8L1253.3,386.0L1254.4,385.2L1255.5,385.5L1256.7,384.9L1257.8,385.3L1258.9,384.5L1260.0,384.8L1261.0,385.8L1262.0,385.1L1263.0,386.6L1263.9,386.2L1264.9,387.5L1265.9,387.7L1266.9,387.4L1267.9,388.0L1268.9,387.5L1269.9,388.1L1271.0,387.5L1272.0,388.1L1273.0,387.7L1273.5,388.4L1274.0,389.8L1274.5,388.4L1275.0,387.8L1276.0,388.3L1277.0,387.9L1278.0,388.6L1279.0,387.8L1280.1,388.4L1281.1,387.9L1282.1,388.6L1283.1,388.1L1284.1,388.7L1285.1,388.1L1286.1,388.9L1287.1,388.1L1288.1,388.8L1289.2,388.4L1290.2,388.9L1291.2,388.2L1292.2,388.9L1293.2,388.7L1294.2,389.0L1295.1,390.3L1296.0,389.9L1297.0,391.0L1298.0,391.3L1299.1,390.7L1300.1,391.2L1301.1,390.7L1302.2,391.2L1303.2,390.7L1304.2,391.1L1305.3,390.7L1306.3,391.0L1307.4,390.6L1308.4,390.9L1309.4,390.6L1310.5,391.1L1311.5,390.6L1312.5,391.0L1313.6,390.5L1314.6,390.7L1315.5,391.7L1316.3,391.5L1317.2,393.0L1318.1,392.3L1318.9,393.8L1319.8,393.3L1320.7,395.0L1321.5,394.5L1322.4,395.5L1323.5,395.9L1324.6,395.2L1325.7,395.6L1326.9,395.3L1327.5,395.9L1328.0,394.5L1328.4,395.9L1329.1,395.1L1330.2,395.5L1330.8,396.7L1331.5,396.4L1332.1,398.5L1332.7,398.0L1333.4,400.2L1334.0,400.4L1335.0,399.8L1336.0,400.5L1337.0,399.7L1338.0,400.0L1339.0,399.4L1340.0,399.4L1341.0,400.3L1341.9,400.1L1342.9,401.1L1343.8,401.0L1344.8,402.1L1345.8,401.8L1346.7,403.2L1347.7,403.3L1348.7,403.2L1349.8,403.7L1350.8,403.3L1351.9,403.9L1352.9,403.3L1353.9,404.1L1355.0,403.5L1356.0,404.2L1357.1,403.6L1358.1,404.3L1359.1,403.8L1360.2,404.4L1361.2,403.9L1362.3,404.6L1363.3,404.3L1364.3,404.1L1365.3,405.4L1366.2,405.0L1367.2,406.2L1368.2,405.7L1369.2,407.1L1370.1,406.4L1371.1,407.9L1372.1,407.5L1373.1,408.3L1374.1,408.0L1375.0,409.2L1376.0,408.6L1377.0,410.0L1378.0,409.7L1378.9,410.7L1379.9,410.3L1380.9,411.1L1381.9,411.5L1382.9,411.0L1383.9,411.6L1384.9,411.3L1386.0,411.8L1387.0,411.5L1388.0,412.3L1389.0,411.7L1390.0,412.1L1391.1,412.5L1392.1,412.1L1393.2,412.7L1394.3,412.5L1395.3,413.1L1396.4,412.8L1397.4,413.6L1398.5,412.8L1399.6,413.8L1400.6,413.2L1401.7,413.7L1402.7,414.4L1403.7,413.9L1404.6,414.9L1405.6,414.5L1406.6,415.5L1407.5,415.4L1408.5,416.2L1409.5,415.8L1410.5,417.1L1411.5,416.5L1412.4,417.5L1413.4,417.2L1414.4,418.3L1415.3,417.8L1416.3,418.7L1417.3,418.5L1418.3,419.7L1419.2,419.1L1420.2,420.1L1421.2,419.7L1422.2,421.0L1423.2,420.5L1424.1,421.6L1425.1,421.1L1426.1,422.2L1427.0,421.7L1428.0,422.8L1429.0,422.8L1430.2,422.3L1431.3,422.6L1432.5,422.0L1433.6,422.3L1434.8,421.8L1435.5,421.9L1436.1,423.7L1436.8,423.6L1437.4,425.2L1438.1,425.0L1438.7,426.7L1439.4,426.8L1440.0,428.3L1440.7,428.7L1441.7,428.5L1442.8,429.2L1443.8,428.7L1444.9,429.2L1445.9,428.7L1447.0,429.5L1448.0,428.7L1449.1,429.5L1450.1,429.1L1451.2,429.7L1452.2,429.3L1453.3,429.9L1454.3,429.6L1455.0,429.9L1455.6,431.7L1456.2,431.7L1456.9,433.4L1457.5,433.3L1458.2,435.0L1458.8,434.8L1459.5,436.5L1460.1,436.7L1460.8,438.4L1461.4,438.0L1462.1,439.4L1462.9,439.2L1463.8,437.9L1464.6,438.3L1465.5,436.6L1465.7,437.3L1466.3,439.6L1467.0,437.3L1467.2,435.6L1468.0,435.5L1468.4,436.7L1468.9,436.5L1469.3,438.9L1469.8,438.4L1470.2,440.4L1470.7,440.4L1471.1,442.6L1471.6,442.4L1472.0,444.0L1472.5,443.7L1472.9,445.8L1473.4,445.6L1473.8,447.2L1474.8,447.4L1475.9,446.9L1476.9,447.4L1477.9,446.6L1478.9,447.1L1480.0,446.6L1481.0,447.0L1482.0,446.4L1483.1,447.1L1484.1,446.4L1485.1,446.9L1486.2,446.2L1487.2,446.8L1488.2,446.2L1489.2,446.6L1490.3,446.1L1491.3,446.2L1491.8,447.5L1492.4,447.4L1492.1,449.3L1493.0,451.9L1493.8,449.3L1493.5,449.4L1494.0,451.4L1494.6,451.3L1494.4,452.8L1495.2,455.0L1495.9,452.8L1495.7,452.7L1495.3,454.8L1496.2,451.6L1497.2,454.8L1496.8,454.6L1497.3,456.7L1497.9,456.4L1498.5,458.4L1499.0,458.9L1500.1,458.3L1501.1,459.1L1502.2,458.5L1503.3,459.0L1504.4,458.1L1505.4,458.6L1506.5,458.1L1507.6,458.4L1508.7,457.7L1509.7,458.2L1510.8,457.9L1511.4,458.0L1511.9,460.3L1512.5,459.7L1512.3,462.1L1513.0,459.9L1513.8,462.1L1513.6,461.7L1514.1,463.6L1514.7,463.5L1515.3,465.9L1515.8,465.5L1516.4,467.6L1516.9,467.3L1517.5,469.1L1518.0,468.7L1518.6,471.2L1519.2,470.2L1519.7,472.9L1520.3,472.1L1520.8,474.5L1521.4,473.7L1521.9,476.3L1522.5,476.4L1523.5,476.3L1524.4,477.7L1525.4,476.7L1526.4,477.9L1527.4,477.6L1528.3,478.8L1529.3,478.1L1530.3,479.3L1531.3,478.8L1532.2,480.1L1533.2,479.3L1534.2,480.8L1535.1,479.9L1536.1,481.3L1537.1,480.6L1538.1,481.9L1539.0,481.1L1540.0,482.6L1541.0,481.8L1542.0,482.9L1542.9,482.4L1543.9,483.2L1543.9,484.4L1544.6,482.1L1545.3,484.4L1545.3,484.3L1546.0,486.4L1546.7,485.7L1547.3,487.3L1548.0,486.9L1548.7,489.2L1549.4,488.3L1550.1,490.4L1550.8,489.8L1551.5,492.0L1552.2,491.6L1552.8,493.9L1553.5,493.0L1554.2,495.1L1554.9,494.8L1555.6,495.9L1556.6,496.5L1557.6,495.7L1558.6,496.8L1559.0,495.7L1559.6,493.9L1560.3,495.7L1560.7,496.8L1561.7,496.3L1562.7,497.1L1563.7,496.3L1564.7,497.5L1565.7,496.4L1566.7,497.7L1567.7,496.8L1568.7,497.8L1569.8,496.9L1570.8,497.8L1571.8,497.0L1572.8,498.1L1573.8,497.5L1574.8,498.4L1575.1,497.5L1575.8,499.8L1576.5,497.5L1576.8,498.4L1577.8,497.8L1578.9,498.7L1579.9,497.9L1580.9,499.0L1581.9,498.1L1582.9,498.8L1583.4,500.4L1583.9,500.1L1583.4,502.2L1584.4,499.5L1585.3,502.2L1584.9,502.0L1585.3,504.4L1584.8,503.7L1585.8,500.4L1586.8,503.7L1586.3,506.3L1586.8,505.5L1587.3,507.4L1587.8,507.1L1588.3,509.8L1588.8,508.9L1588.5,511.1L1589.2,508.7L1589.9,511.1L1589.7,510.5L1590.2,513.2L1590.7,513.4L1591.8,512.6L1592.9,513.9L1593.9,512.9L1595.0,513.4L1596.1,512.4L1597.2,513.2L1598.2,512.4L1599.3,513.0L1600.4,512.5L1600.1,512.5L1601.1,515.3L1602.0,512.5L1601.7,514.7L1601.6,514.5L1602.4,516.8L1603.1,514.5L1602.3,516.6L1603.0,518.9L1603.8,516.6L1603.7,516.3L1604.3,518.5L1605.0,517.3L1605.6,519.8L1606.3,520.2L1607.3,520.1L1607.8,521.6L1608.2,523.0L1608.7,521.6L1609.2,520.7L1610.2,521.9L1611.2,521.2L1612.2,522.8L1613.1,522.2L1614.1,523.4L1615.1,522.6L1616.0,524.2L1617.0,522.9L1618.0,524.1L1618.6,525.5L1619.3,525.0L1619.0,527.1L1619.9,523.9L1620.9,527.1L1620.6,526.4L1621.2,529.4L1621.9,528.5L1622.5,531.5L1623.2,530.4L1623.8,532.0L1624.1,532.9L1624.7,534.6L1625.3,532.9L1625.6,532.3L1626.6,534.1L1627.5,533.6L1627.7,535.0L1628.4,532.9L1629.1,535.0L1628.8,534.6L1629.3,536.2L1629.8,534.6L1629.5,535.9L1630.2,538.4L1630.9,535.9L1630.4,535.2L1631.1,532.6L1631.9,535.2L1632.1,537.2L1633.0,536.7L1633.9,538.2L1634.8,537.6L1635.7,539.2L1636.6,538.3L1637.6,540.5L1638.5,539.6L1639.4,540.7L1640.4,541.5L1641.3,541.0L1642.3,542.1L1643.3,541.2L1644.3,542.6L1645.2,541.8L1646.2,543.0L1647.2,542.3L1647.7,543.9L1648.1,545.5L1648.6,543.9L1649.1,542.7L1650.1,544.3L1651.1,543.3L1652.0,545.0L1653.0,544.6L1653.0,545.0L1653.7,547.1L1654.3,545.0L1654.3,547.1L1655.0,546.3L1654.6,548.5L1655.6,551.7L1656.7,548.5L1656.3,548.0L1657.0,549.9L1657.6,549.8L1657.5,551.9L1658.3,549.5L1659.0,551.9L1658.9,550.8L1659.6,553.2L1659.3,552.5L1660.2,549.3L1661.2,552.5L1660.9,554.3L1661.1,556.1L1660.5,555.2L1661.4,552.8L1662.3,555.2L1661.6,558.4L1661.9,557.6L1662.1,560.2L1662.3,559.8L1662.6,562.2L1662.8,561.7L1663.0,564.3L1662.4,563.2L1663.3,566.0L1664.1,563.2L1662.5,565.9L1663.5,569.1L1664.5,565.9L1663.8,565.2L1664.0,567.5L1664.2,567.7L1664.5,569.9L1664.7,570.0" stroke="#ea7f58" stroke-width="3.6" fill="none" stroke-linejoin="miter" stroke-miterlimit="4"/>
<path d="M578.3,352.0L840.0,352.0L841.0,351.7L842.0,352.3L843.0,351.6L844.0,352.1L845.0,351.6L846.0,352.3L847.0,351.7L848.0,352.2L849.1,351.8L850.1,352.1L851.1,351.6L852.1,352.3L853.1,351.6L854.1,352.0L855.1,351.7L856.1,352.3L857.1,351.6L858.1,352.1L859.1,351.7L860.1,352.2L861.1,351.4L862.1,352.0L863.1,351.6L864.1,352.0L865.1,351.7L866.2,352.0L867.2,351.4L868.2,352.0L869.2,351.4L870.2,352.2L871.2,351.4L872.2,351.9L873.2,351.5L874.2,351.8L875.2,351.5L876.2,351.9L877.2,351.3L878.2,351.9L879.2,351.4L880.2,351.8L881.2,351.3L882.2,351.8L883.2,351.5L884.3,351.9L885.3,351.4L886.3,351.9L887.3,351.4L888.3,351.7L889.3,351.3L890.3,351.8L891.3,351.2L892.3,351.8L893.3,351.3L894.3,351.8L895.3,351.4L896.3,351.7L897.3,351.1L898.3,351.9L899.3,351.2L900.3,351.7L901.4,351.3L902.4,351.7L903.4,351.0L904.4,351.9L905.4,351.2L906.4,351.7L907.4,351.2L908.4,351.7L909.4,351.0L910.4,351.7L911.4,351.3L912.4,351.8L913.4,351.2L914.4,351.7L915.4,351.0L916.4,351.6L917.4,351.1L918.5,351.7L919.5,351.1L920.5,351.6L921.5,351.2L922.5,351.5L923.5,351.0L924.5,351.6L925.5,351.1L926.5,351.6L927.5,351.0L928.5,351.6L929.5,350.8L930.5,351.5L931.5,351.1L932.5,351.6L933.5,350.9L934.5,351.6L935.6,350.8L936.6,351.5L937.6,350.9L938.6,351.5L939.6,351.0L940.6,351.4L941.6,351.0L942.6,351.5L943.6,350.9L944.6,351.3L945.6,350.9L946.6,351.3L947.6,350.8L948.6,351.4L949.6,350.9L950.6,351.2L951.6,350.9L952.7,351.2L953.7,350.8L954.7,351.4L955.7,350.7L956.7,351.3L957.7,350.6L958.7,351.4L959.7,350.8L960.7,351.3L961.7,350.6L962.7,351.3L963.4,350.6L963.7,351.5L964.0,350.6L964.7,351.1L965.7,350.6L966.7,351.2L967.7,350.7L968.7,351.2L969.7,350.5L970.8,351.1L971.8,350.6L972.8,351.1L973.8,350.6L974.8,351.1L975.8,350.6L976.8,351.1L977.8,350.5L978.8,351.1L979.8,350.4L980.8,351.0L981.8,350.6L982.8,351.0L983.8,350.5L984.8,351.1L985.8,350.6L986.8,351.0L987.9,350.5L988.9,351.0L989.9,350.5L990.9,351.0L991.9,350.5L992.9,351.1L993.9,350.4L994.9,351.1L995.9,350.7L996.9,350.7L997.8,352.2L998.8,351.6L999.8,352.7L1000.9,352.9L1002.0,352.3L1003.0,352.9L1004.1,352.0L1005.2,352.6L1006.3,351.9L1007.3,352.3L1008.4,351.8L1009.5,352.0L1010.5,353.0L1011.5,352.8L1012.4,354.2L1013.4,354.6L1014.4,354.2L1015.4,354.9L1016.5,354.3L1017.5,355.0L1018.5,354.5L1019.5,354.8L1020.5,354.2L1021.5,354.8L1022.6,354.2L1023.6,354.9L1024.6,354.4L1025.6,354.7L1026.6,354.4L1027.6,354.7L1028.7,354.3L1029.7,354.8L1030.7,354.4L1031.7,354.9L1032.7,354.4L1033.7,354.9L1034.8,354.3L1035.8,355.0L1036.8,354.6L1037.8,354.5L1038.8,355.7L1039.7,355.2L1040.7,356.0L1041.7,356.2L1042.7,355.7L1043.7,356.1L1044.7,355.6L1045.7,356.3L1046.7,355.8L1047.7,356.1L1048.7,355.6L1049.7,356.3L1050.7,355.5L1051.7,356.1L1052.7,355.5L1053.7,356.0L1054.7,355.5L1055.7,356.0L1056.7,355.6L1057.7,356.0L1058.7,355.6L1059.7,356.0L1060.7,355.5L1061.7,356.0L1062.7,355.5L1063.7,356.0L1064.7,355.5L1065.7,355.9L1066.7,355.6L1067.7,356.0L1068.7,355.6L1069.7,356.1L1070.7,355.4L1071.7,355.8L1072.7,355.5L1073.7,355.9L1074.7,355.4L1075.7,355.8L1076.8,355.4L1077.8,355.9L1078.8,355.2L1079.8,356.0L1080.8,355.2L1081.8,356.0L1082.8,355.2L1083.8,355.9L1084.8,355.3L1085.8,355.6L1086.8,355.3L1087.8,355.9L1088.8,355.2L1089.8,355.7L1090.8,355.1L1091.8,355.6L1092.8,355.0L1093.8,355.7L1094.8,355.3L1095.8,355.7L1096.8,355.2L1097.8,355.8L1098.8,355.1L1099.8,355.5L1100.8,355.1L1101.8,355.5L1102.8,355.2L1103.8,355.4L1104.8,355.0L1105.8,355.4L1106.8,354.9L1107.8,355.5L1108.8,355.0L1109.8,355.5L1110.8,354.9L1111.8,355.5L1112.8,355.2L1113.3,355.1L1113.8,353.4L1114.4,355.1L1114.8,355.6L1115.8,355.1L1116.8,355.8L1117.8,355.2L1118.8,355.9L1119.8,355.6L1120.8,356.3L1121.9,355.8L1122.9,356.3L1123.9,355.9L1124.9,356.5L1125.9,356.0L1126.9,356.6L1127.9,356.3L1128.9,356.9L1129.9,356.3L1130.9,357.2L1131.9,356.5L1132.9,357.2L1133.9,356.7L1134.9,357.5L1135.9,357.0L1137.0,357.6L1138.0,357.2L1139.0,357.7L1140.0,357.3L1141.0,358.0L1142.0,357.6L1143.0,358.0L1144.0,357.5L1145.0,358.0L1146.0,358.3L1147.0,357.8L1148.0,358.3L1149.0,357.7L1150.0,358.4L1151.0,357.8L1152.1,358.4L1153.1,357.7L1154.1,358.2L1155.1,357.7L1156.1,358.3L1157.1,357.7L1158.1,358.4L1159.1,357.8L1160.1,358.5L1161.1,358.0L1162.1,358.3L1163.2,357.9L1164.2,358.4L1165.2,358.0L1166.2,358.5L1167.2,357.8L1168.2,358.4L1169.2,357.8L1170.2,358.6L1171.2,358.0L1172.2,358.6L1173.2,358.1L1174.2,358.4L1175.2,357.9L1176.3,358.6L1177.3,357.9L1178.3,358.6L1178.8,358.0L1179.3,359.6L1179.8,358.0L1180.3,358.5L1181.3,358.2L1182.3,358.5L1183.3,358.0L1184.3,358.7L1185.3,357.9L1186.3,358.7L1187.3,358.0L1188.4,358.7L1189.4,358.1L1190.4,358.5L1191.4,358.2L1192.4,358.7L1193.4,358.2L1194.4,358.6L1195.4,358.3L1196.4,358.8L1197.4,358.0L1198.4,358.8L1199.5,358.1L1200.5,358.7L1201.5,358.3L1202.5,358.8L1203.5,358.4L1204.5,358.7L1205.5,358.5L1206.5,358.3L1207.4,359.6L1208.4,359.3L1209.4,360.2L1210.3,359.8L1211.3,360.5L1212.3,360.8L1213.3,360.4L1214.4,361.1L1215.4,360.4L1216.4,361.1L1217.4,360.6L1218.5,361.4L1219.5,360.8L1220.5,361.4L1221.5,361.0L1222.5,361.6L1223.6,361.1L1224.6,361.6L1225.6,361.1L1226.6,361.7L1227.6,361.3L1228.7,362.0L1229.7,361.5L1230.7,362.2L1231.7,361.5L1232.8,362.4L1233.8,361.7L1234.8,362.4L1235.8,362.0L1236.8,362.4L1237.9,362.0L1238.9,362.7L1239.9,362.0L1240.9,362.9L1241.9,362.1L1243.0,363.1L1244.0,362.5L1245.0,363.0L1246.0,362.6L1247.0,363.3L1248.1,362.7L1249.1,363.3L1250.1,362.8L1251.1,363.5L1252.2,362.8L1253.2,363.5L1254.2,363.4L1255.2,363.3L1256.1,364.2L1257.1,364.0L1258.1,365.2L1259.0,364.7L1260.0,365.3L1261.0,365.6L1262.0,364.9L1263.1,365.4L1264.1,364.8L1265.1,365.3L1266.1,364.7L1267.2,365.2L1268.2,364.7L1269.2,365.2L1270.2,364.5L1271.3,365.1L1272.3,364.7L1273.3,365.0L1274.3,364.5L1275.4,364.9L1276.4,364.5L1277.4,365.0L1278.4,364.3L1279.5,364.7L1280.5,364.1L1281.5,364.4L1282.5,364.7L1283.6,364.3L1284.6,365.2L1285.7,364.6L1286.0,365.3L1286.7,363.2L1287.4,365.3L1287.7,364.9L1288.8,365.7L1289.8,365.2L1290.8,365.9L1291.9,365.6L1292.9,366.5L1294.0,365.9L1295.0,366.3L1296.0,366.7L1297.0,366.1L1298.0,366.8L1299.0,366.5L1300.0,367.2L1300.2,366.7L1301.0,364.5L1301.8,366.7L1302.0,367.2L1303.0,366.7L1304.0,367.3L1305.0,367.0L1306.0,367.8L1307.0,367.1L1308.0,367.9L1309.0,367.3L1310.0,368.0L1311.0,367.6L1312.0,368.3L1313.0,367.6L1314.0,368.5L1315.0,368.0L1316.0,368.6L1316.4,368.1L1317.0,370.2L1317.6,368.1L1318.0,368.9L1319.0,368.5L1320.0,369.0L1321.0,368.6L1322.0,369.2L1323.0,368.7L1324.0,369.5L1325.0,368.9L1326.0,369.8L1327.0,369.3L1328.0,370.0L1329.0,369.4L1330.0,370.1L1331.0,369.5L1332.0,370.3L1333.0,369.9L1334.0,370.2L1335.0,371.1L1336.0,370.9L1337.0,371.9L1338.0,371.8L1338.9,373.3L1339.9,372.8L1340.9,374.1L1341.9,374.1L1342.9,373.8L1343.9,374.5L1345.0,374.2L1346.0,374.9L1347.0,374.1L1348.0,374.8L1349.0,374.4L1350.1,375.0L1351.1,374.5L1352.1,375.4L1353.1,374.8L1354.1,375.6L1355.1,374.9L1356.2,375.8L1357.2,375.3L1358.2,375.7L1359.2,375.4L1360.2,376.2L1361.3,375.7L1362.3,376.3L1363.3,376.0L1364.1,376.0L1364.0,377.7L1364.9,374.8L1365.9,377.7L1365.8,377.5L1366.6,379.0L1367.4,378.6L1368.2,380.0L1369.2,380.2L1370.2,379.9L1371.2,380.3L1372.3,379.8L1373.3,380.3L1374.3,379.7L1375.3,380.4L1376.3,379.8L1377.3,380.3L1378.4,379.7L1379.4,380.2L1380.4,379.6L1381.4,380.2L1382.4,379.8L1383.4,380.2L1384.4,379.7L1385.5,380.2L1386.5,379.8L1387.5,380.3L1388.5,379.7L1389.5,380.4L1390.5,379.7L1391.5,380.2L1392.6,379.8L1393.6,380.1L1394.6,379.8L1395.6,380.1L1396.6,379.8L1397.6,380.4L1398.7,379.7L1399.7,380.2L1400.7,379.9L1401.7,380.0L1402.6,380.9L1403.4,380.6L1404.3,382.3L1405.2,381.9L1406.0,382.9L1406.9,383.0L1407.8,384.2L1408.6,383.9L1409.5,384.8L1410.5,385.3L1411.5,384.8L1412.6,385.5L1413.6,384.8L1414.6,385.5L1415.6,385.0L1416.6,385.6L1417.6,385.2L1418.7,386.0L1419.7,385.4L1420.7,386.2L1421.7,385.6L1422.7,386.3L1423.8,385.8L1424.8,386.5L1425.8,385.8L1426.8,386.5L1427.8,386.1L1428.8,386.9L1429.9,386.2L1430.9,387.0L1431.9,386.5L1432.9,387.2L1433.9,386.5L1435.0,387.3L1436.0,386.8L1437.0,387.6L1438.0,387.0L1439.0,387.6L1440.0,387.2L1441.1,387.7L1442.1,387.3L1443.1,387.9L1444.1,387.6L1445.1,388.3L1446.2,387.6L1447.2,388.3L1448.2,387.9L1449.2,388.6L1450.2,388.2L1451.2,388.6L1452.3,388.1L1453.3,388.8L1454.3,388.7L1455.2,388.7L1456.2,389.8L1457.1,389.4L1458.0,390.9L1458.9,390.4L1459.9,391.5L1460.8,391.4L1461.7,392.5L1462.7,392.1L1463.6,393.2L1464.5,393.0L1465.4,394.2L1466.4,393.7L1467.3,394.9L1468.2,394.7L1469.2,395.6L1470.1,395.6L1471.0,396.6L1471.9,396.3L1472.9,397.3L1473.8,397.5L1474.8,397.3L1475.8,398.5L1476.7,397.8L1476.8,398.9L1477.7,401.3L1478.6,398.9L1478.7,398.5L1479.6,399.2L1480.6,399.0L1481.6,399.6L1482.6,399.4L1483.5,400.3L1484.5,399.7L1485.5,400.9L1486.5,400.4L1486.8,401.2L1487.5,399.5L1488.1,401.2L1488.4,400.7L1489.4,401.9L1490.4,401.2L1491.3,402.2L1492.3,401.7L1493.3,402.4L1493.8,402.1L1494.3,400.0L1494.8,399.9L1495.2,397.7L1495.7,398.1L1496.2,396.5L1495.5,397.0L1496.4,399.9L1497.3,397.0L1495.8,399.0L1496.5,401.2L1497.2,399.0L1496.7,399.3L1496.9,401.5L1497.0,401.1L1497.2,402.9L1496.4,403.3L1497.4,406.2L1498.4,403.3L1497.5,405.4L1497.7,404.8L1497.9,407.3L1498.0,407.1L1498.2,409.5L1498.3,409.3L1498.5,411.1L1498.7,411.3L1497.9,413.4L1498.8,416.5L1499.8,413.4L1499.0,413.0L1499.2,415.3L1499.3,415.5L1499.5,417.2L1499.7,417.0L1499.8,419.2L1500.0,419.9L1500.4,418.3L1500.9,418.3L1500.4,416.4L1501.3,419.4L1502.2,416.4L1501.7,416.3L1502.1,414.1L1502.6,414.3L1503.0,413.0L1504.0,412.7L1505.0,413.8L1506.0,413.2L1507.0,414.1L1508.1,413.8L1509.1,414.7L1510.1,414.4L1511.1,415.1L1512.1,414.5L1513.1,415.5L1514.1,414.9L1515.1,416.0L1516.1,415.5L1517.2,416.5L1518.2,416.0L1519.2,416.9L1520.2,416.4L1521.2,417.2L1521.8,416.7L1522.2,415.5L1522.6,416.7L1523.2,417.6L1524.2,417.2L1524.7,418.3L1525.2,420.1L1525.7,418.3L1526.3,417.7L1527.3,418.9L1528.3,418.1L1529.3,419.0L1530.3,419.0L1530.7,419.4L1531.2,421.3L1531.6,421.3L1532.1,423.9L1532.5,423.3L1531.9,425.8L1533.0,429.0L1534.0,425.8L1533.4,425.3L1533.9,427.4L1534.3,427.1L1534.8,429.4L1535.2,428.9L1534.6,431.1L1535.7,434.4L1536.7,431.1L1536.1,431.6L1537.1,431.6L1538.0,433.1L1539.0,432.4L1540.0,434.0L1541.0,433.7L1542.0,434.8L1542.9,434.6L1543.9,435.5L1545.0,435.7L1546.0,434.9L1547.1,435.8L1548.1,435.3L1549.2,435.8L1550.2,435.2L1551.3,435.7L1552.3,434.9L1553.4,436.1L1554.4,435.0L1555.5,435.8L1556.5,435.3L1557.6,435.5L1558.2,437.2L1558.7,436.8L1559.3,439.0L1559.8,437.9L1560.4,440.7L1560.9,439.9L1560.7,441.9L1561.5,444.3L1562.3,441.9L1562.1,441.8L1562.6,443.6L1563.2,443.1L1563.7,445.6L1564.3,444.9L1564.8,446.9L1565.4,446.2L1565.3,448.6L1566.0,450.6L1566.6,448.6L1566.5,448.5L1567.1,450.2L1567.6,449.7L1568.2,451.9L1568.7,451.7L1569.3,453.0L1570.3,453.3L1571.4,452.5L1572.4,453.4L1573.5,452.5L1574.5,453.2L1575.5,452.6L1576.6,453.2L1577.6,452.6L1578.7,453.5L1579.7,452.7L1580.7,453.5L1581.8,452.6L1582.8,453.4L1583.9,452.5L1584.9,453.0L1585.7,454.4L1585.7,453.9L1586.6,457.1L1587.4,453.9L1586.8,455.7L1587.4,457.9L1588.0,455.7L1587.4,454.8L1588.2,452.4L1589.0,454.8L1589.0,456.8L1589.9,456.7L1590.7,457.9L1591.7,458.7L1592.6,457.9L1593.6,459.1L1594.6,458.3L1595.6,459.9L1596.5,458.7L1597.5,460.1L1598.5,459.5L1599.4,461.1L1600.4,460.0L1601.4,461.6L1602.4,460.5L1603.3,462.2L1604.3,461.8L1605.2,461.6L1606.1,463.2L1606.9,462.9L1607.8,464.6L1608.7,463.6L1609.6,466.0L1610.5,464.8L1611.3,466.6L1611.3,465.6L1612.2,468.3L1613.1,465.6L1613.1,468.0L1614.0,467.3L1614.9,469.0L1615.7,467.7L1615.8,470.2L1616.6,468.0L1617.4,470.2L1617.5,469.0L1618.4,471.2L1619.3,470.1L1620.1,472.4L1621.0,470.9L1621.9,472.5L1622.4,474.2L1621.8,473.5L1622.8,477.0L1623.9,473.5L1622.3,475.7L1623.3,479.1L1624.3,475.7L1623.7,475.2L1624.2,478.1L1624.7,476.9L1625.1,479.6L1625.0,479.3L1625.6,481.4L1626.2,479.3L1626.1,481.9L1626.5,481.1L1627.0,483.3L1626.6,482.9L1627.4,485.7L1628.3,482.9L1627.0,485.6L1627.9,488.3L1628.8,485.6L1628.4,484.4L1627.8,487.6L1628.8,490.9L1629.9,487.6L1629.3,486.8L1629.8,489.3L1629.4,488.2L1630.2,485.7L1631.0,488.2L1629.5,491.3L1630.7,494.8L1631.8,491.3L1631.1,490.6L1631.6,492.0L1632.5,493.4L1633.3,492.7L1634.2,494.6L1635.1,493.6L1635.2,495.9L1635.9,493.8L1636.7,495.9L1636.8,495.1L1637.7,497.4L1638.0,496.5L1638.5,498.3L1639.0,496.5L1639.4,497.8L1640.5,498.0L1641.5,497.4L1642.6,498.2L1643.6,497.5L1644.3,498.3L1644.7,497.4L1645.0,498.3L1645.7,497.4L1646.8,498.1L1647.8,497.1L1648.9,498.1L1649.9,497.1L1651.0,497.8L1651.4,499.3L1651.9,499.2L1652.3,501.1L1652.7,500.4L1653.2,503.3L1653.6,502.9L1654.0,505.4L1654.4,504.2L1654.9,507.4L1655.3,506.0L1655.7,509.2L1656.2,508.6L1656.6,510.9L1656.3,509.9L1657.0,512.5L1657.8,509.9L1657.5,512.4L1657.9,512.1L1658.3,514.4L1658.7,513.8L1658.3,516.7L1659.2,520.0L1660.1,516.7L1659.6,515.5L1660.0,518.3L1660.5,517.4L1660.9,519.3L1661.0,520.8L1659.9,520.9L1661.2,524.3L1662.4,520.9L1661.3,523.0L1661.5,522.3L1661.6,524.8L1661.0,524.2L1661.7,521.5L1662.5,524.2L1661.9,527.0L1662.0,526.7L1662.2,529.2L1662.3,528.4L1662.4,531.6L1662.6,530.3L1662.7,533.3L1662.9,532.4L1663.0,534.9L1662.2,534.9L1663.2,537.9L1664.1,534.9L1662.4,536.8L1663.3,539.8L1664.2,536.8L1663.4,536.5L1663.6,539.4L1662.8,538.2L1663.7,541.1L1664.7,538.2L1663.9,541.6L1663.0,540.5L1664.0,537.2L1665.0,540.5L1664.1,543.5L1664.3,542.9L1664.4,545.7L1664.6,544.7L1664.7,546.5" stroke="#f8b434" stroke-width="3.6" fill="none" stroke-linejoin="miter" stroke-miterlimit="4"/>
<path d="M578.00,352.00V587.50H1666.10" stroke="#888888" stroke-width="1.6" fill="none"/>
<text x="566.6" y="592.8" font-size="16" text-anchor="end" fill="#000">0.0</text>
<text x="566.6" y="545.7" font-size="16" text-anchor="end" fill="#000">0.2</text>
<text x="566.6" y="498.6" font-size="16" text-anchor="end" fill="#000">0.4</text>
<text x="566.6" y="451.5" font-size="16" text-anchor="end" fill="#000">0.6</text>
<text x="566.6" y="404.4" font-size="16" text-anchor="end" fill="#000">0.8</text>
<text x="566.6" y="357.3" font-size="16" text-anchor="end" fill="#000">1.0</text>
<text x="578.0" y="612.0" font-size="16" text-anchor="start" fill="#000">0.00</text>
<text x="632.4" y="612.0" font-size="16" text-anchor="middle" fill="#000">0.05</text>
<text x="686.8" y="612.0" font-size="16" text-anchor="middle" fill="#000">0.10</text>
<text x="741.2" y="612.0" font-size="16" text-anchor="middle" fill="#000">0.15</text>
<text x="795.6" y="612.0" font-size="16" text-anchor="middle" fill="#000">0.20</text>
<text x="850.0" y="612.0" font-size="16" text-anchor="middle" fill="#000">0.25</text>
<text x="904.4" y="612.0" font-size="16" text-anchor="middle" fill="#000">0.30</text>
<text x="958.8" y="612.0" font-size="16" text-anchor="middle" fill="#000">0.35</text>
<text x="1013.2" y="612.0" font-size="16" text-anchor="middle" fill="#000">0.40</text>
<text x="1067.6" y="612.0" font-size="16" text-anchor="middle" fill="#000">0.45</text>
<text x="1122.0" y="612.0" font-size="16" text-anchor="middle" fill="#000">0.50</text>
<text x="1176.5" y="612.0" font-size="16" text-anchor="middle" fill="#000">0.55</text>
<text x="1230.9" y="612.0" font-size="16" text-anchor="middle" fill="#000">0.60</text>
<text x="1285.3" y="612.0" font-size="16" text-anchor="middle" fill="#000">0.65</text>
<text x="1339.7" y="612.0" font-size="16" text-anchor="middle" fill="#000">0.70</text>
<text x="1394.1" y="612.0" font-size="16" text-anchor="middle" fill="#000">0.75</text>
<text x="1448.5" y="612.0" font-size="16" text-anchor="middle" fill="#000">0.80</text>
<text x="1502.9" y="612.0" font-size="16" text-anchor="middle" fill="#000">0.85</text>
<text x="1557.3" y="612.0" font-size="16" text-anchor="middle" fill="#000">0.90</text>
<text x="1611.7" y="612.0" font-size="16" text-anchor="middle" fill="#000">0.95</text>
<text x="1666.1" y="612.0" font-size="16" text-anchor="end" fill="#000">1.00</text>
<text x="1122.0" y="332.1" font-size="21" font-weight="bold" text-anchor="middle" fill="#000">Average precision across runs</text>
<text x="1122.0" y="635.9" font-size="17.6" font-weight="bold" text-anchor="middle" fill="#000">Recall</text>
<text transform="translate(535,469.8) rotate(-90)" font-size="17.6" font-weight="bold" text-anchor="middle" fill="#000">Precision</text>
<text x="1697.8" y="365.6" font-size="17.8" font-weight="bold" fill="#000">Run name</text>
<path d="M1699.2,386.4h16" stroke="#5c10a8" stroke-width="2.5"/>
<text x="1723.6" y="391.1" font-size="16" fill="#000">AP: N=100, E=1</text>
<path d="M1699.2,407.2h16" stroke="#9c1fa0" stroke-width="2.5"/>
<text x="1723.6" y="411.9" font-size="16" fill="#000">AP: N=100, E=5</text>
<path d="M1699.2,428.0h16" stroke="#cb4e80" stroke-width="2.5"/>
<text x="1723.6" y="432.7" font-size="16" fill="#000">AP: N=1000, E=1</text>
<path d="M1699.2,448.8h16" stroke="#ea7f58" stroke-width="2.5"/>
<text x="1723.6" y="453.5" font-size="16" fill="#000">AP: N=1000, E=5</text>
<path d="M1699.2,469.6h16" stroke="#f8b434" stroke-width="2.5"/>
<text x="1723.6" y="474.3" font-size="16" fill="#000">AP: N=5000, E=10</text>
</svg>
<svg width="1942" height="1334" viewBox="0 0 1942 1334">
<path d="M578.00,926.00V1207.56M634.10,926.00V1207.56M690.20,926.00V1207.56M746.30,926.00V1207.56M802.40,926.00V1207.56M858.50,926.00V1207.56M914.60,926.00V1207.56M970.70,926.00V1207.56M1026.80,926.00V1207.56M1082.90,926.00V1207.56M1139.00,926.00V1207.56M1195.10,926.00V1207.56M1251.20,926.00V1207.56M1307.30,926.00V1207.56M1363.40,926.00V1207.56M1419.50,926.00V1207.56M1475.60,926.00V1207.56M1531.70,926.00V1207.56M1587.80,926.00V1207.56M1643.90,926.00V1207.56M1700.00,926.00V1207.56M578.00,1207.56H1700.00M578.00,1151.25H1700.00M578.00,1094.94H1700.00M578.00,1038.62H1700.00M578.00,982.31H1700.00M578.00,926.00H1700.00" stroke="#dddddd" stroke-width="1.6" fill="none"/>
<path d="M578.00,1207.56v8M634.10,1207.56v8M690.20,1207.56v8M746.30,1207.56v8M802.40,1207.56v8M858.50,1207.56v8M914.60,1207.56v8M970.70,1207.56v8M1026.80,1207.56v8M1082.90,1207.56v8M1139.00,1207.56v8M1195.10,1207.56v8M1251.20,1207.56v8M1307.30,1207.56v8M1363.40,1207.56v8M1419.50,1207.56v8M1475.60,1207.56v8M1531.70,1207.56v8M1587.80,1207.56v8M1643.90,1207.56v8M1700.00,1207.56v8M578.00,1207.56h-8M578.00,1151.25h-8M578.00,1094.94h-8M578.00,1038.62h-8M578.00,982.31h-8M578.00,926.00h-8" stroke="#888888" stroke-width="1.6" fill="none"/>
<path d="M647.4,925.6L665.8,925.8L803.0,927.0L940.0,930.2L1018.7,932.0L1097.5,935.4L1176.2,940.7L1255.0,945.9L1320.0,952.0L1419.2,961.5L1439.6,965.6L1506.9,995.0L1545.6,1019.4L1560.0,1026.0L1589.7,1038.9L1607.2,1057.8L1624.8,1069.9L1646.3,1083.4L1654.0,1092.6L1654.6,1093.2L1655.3,1094.5L1655.9,1094.8L1656.6,1095.9L1657.2,1096.3L1657.9,1097.4L1658.5,1097.9L1657.9,1099.1L1659.2,1095.6L1660.4,1099.1L1659.8,1099.6L1660.8,1099.8L1661.7,1100.5L1662.7,1100.7L1663.0,1101.3L1663.6,1099.3L1664.2,1101.3L1664.6,1101.4L1665.5,1102.1L1666.5,1102.2L1667.4,1103.0L1668.4,1102.9L1669.3,1103.7L1670.3,1103.8L1671.2,1104.5L1672.2,1104.5L1673.1,1105.4L1674.1,1105.4L1675.0,1106.1L1676.0,1106.3L1676.6,1106.9L1677.2,1108.2L1677.8,1108.7L1678.4,1110.0L1679.0,1110.5L1679.6,1111.8L1679.3,1112.5L1680.2,1109.3L1681.1,1112.5L1680.8,1113.7L1681.4,1114.4L1681.8,1115.1L1682.2,1116.5L1682.6,1117.0L1683.1,1118.3L1683.5,1118.8L1683.9,1120.3L1684.3,1120.8L1684.7,1122.1L1685.1,1122.5L1685.6,1123.9L1686.0,1124.6L1686.4,1125.8L1686.8,1126.6L1687.2,1127.3L1687.7,1128.7L1688.1,1129.2L1688.5,1130.5L1688.9,1130.9L1689.4,1132.3L1689.8,1132.8L1690.2,1134.1L1690.6,1134.6L1691.1,1136.1L1691.5,1136.5L1690.9,1137.8L1691.9,1134.3L1692.9,1137.8L1692.3,1138.4L1692.8,1139.7L1693.2,1140.3L1693.6,1141.4L1694.0,1142.0L1694.5,1143.4L1694.9,1144.1L1695.2,1144.8L1695.5,1146.2L1695.1,1146.9L1695.8,1144.6L1696.5,1146.9L1696.2,1148.2L1696.5,1148.8L1696.8,1150.3L1697.1,1150.8L1696.3,1152.2L1697.4,1148.8L1698.6,1152.2L1697.7,1152.9L1698.0,1154.2L1698.3,1154.9L1698.7,1156.1L1699.0,1156.8L1699.3,1158.3L1699.6,1159.0" stroke="#e0714f" stroke-width="3.2" fill="none" stroke-linejoin="miter" stroke-miterlimit="4"/>
<path d="M736.7,940.7L940.0,943.3L966.2,946.7L1139.5,973.0L1252.0,994.2L1320.0,1008.1L1419.2,1029.6L1484.4,1043.1L1517.0,1060.2L1560.0,1078.0L1569.4,1082.7L1578.9,1093.5L1611.3,1107.7L1616.7,1114.4L1635.5,1119.8L1646.3,1127.9L1649.7,1132.0L1654.0,1138.3L1654.6,1139.0L1655.2,1140.3L1655.9,1140.9L1656.5,1142.1L1657.1,1142.8L1658.1,1143.0L1659.1,1143.7L1660.0,1143.8L1661.0,1144.4L1662.0,1144.5L1663.0,1145.1L1664.0,1145.2L1664.5,1145.9L1665.0,1147.3L1665.4,1145.9L1665.9,1146.0L1666.9,1146.7L1667.9,1146.8L1668.6,1147.4L1669.2,1148.5L1669.9,1149.0L1670.6,1150.1L1671.3,1150.5L1672.0,1151.7L1672.6,1152.1L1673.3,1153.2L1674.0,1153.6L1674.7,1155.0L1675.3,1155.3L1676.0,1156.3L1676.5,1157.5L1677.1,1158.0L1677.6,1159.3L1677.1,1159.9L1678.2,1163.1L1679.2,1159.9L1678.7,1161.1L1679.2,1161.8L1679.8,1163.0L1680.3,1163.7L1680.9,1164.9L1681.4,1165.7L1682.3,1166.1L1683.2,1167.0L1684.1,1167.4L1685.0,1168.3L1685.9,1168.5L1686.8,1169.4L1687.7,1169.7L1688.6,1170.7L1689.5,1171.1L1690.3,1171.7L1691.1,1172.7L1691.3,1173.0L1691.9,1171.1L1692.5,1173.0L1692.7,1174.1L1693.5,1174.4L1694.4,1175.4L1695.2,1175.6L1696.0,1176.7L1696.8,1176.9L1697.6,1177.8" stroke="#f7bc6e" stroke-width="3.2" fill="none" stroke-linejoin="miter" stroke-miterlimit="4"/>
<path d="M665.8,926.0L803.0,931.0L940.0,938.8L1071.2,948.6L1202.4,959.0L1320.0,970.9L1411.0,982.7L1476.3,1008.0L1517.0,1031.7L1531.3,1052.1L1560.0,1065.2L1614.0,1086.1L1619.4,1091.5L1623.4,1105.0L1646.3,1117.1L1654.0,1122.2L1654.4,1122.5L1655.0,1123.2L1655.6,1124.5L1656.1,1125.0L1656.7,1126.1L1657.3,1126.6L1657.9,1127.9L1658.5,1128.4L1659.0,1129.8L1659.6,1130.2L1660.2,1131.3L1660.8,1131.8L1661.3,1133.2L1661.9,1133.5L1662.5,1134.7L1663.3,1135.5L1664.0,1135.8L1664.8,1136.9L1665.6,1137.2L1666.4,1138.2L1667.1,1138.5L1667.9,1139.7L1668.7,1139.9L1669.4,1140.9L1670.2,1141.2L1671.0,1142.2L1671.8,1142.6L1672.5,1143.6L1673.3,1144.1L1673.9,1144.8L1674.5,1145.9L1675.2,1146.5L1675.8,1147.5L1676.4,1147.9L1677.0,1149.3L1677.7,1149.8L1678.3,1151.0L1678.9,1151.3L1679.5,1152.6L1680.2,1152.9L1680.8,1154.2L1681.4,1154.9L1682.1,1155.4L1682.8,1156.5L1683.6,1156.8L1684.3,1157.9L1685.0,1158.3L1685.7,1159.4L1686.4,1159.8L1687.2,1160.8L1687.9,1161.3L1688.6,1162.2L1689.3,1162.6L1690.0,1163.6L1690.8,1164.1L1691.5,1165.1L1692.2,1165.7L1692.8,1166.4L1693.4,1167.6L1694.1,1168.2L1694.7,1169.3L1695.3,1169.9L1695.9,1171.0L1696.5,1171.5L1697.1,1172.8L1697.8,1173.3L1698.4,1174.5L1699.0,1175.1" stroke="#fdf2aa" stroke-width="3.2" fill="none" stroke-linejoin="miter" stroke-miterlimit="4"/>
<path d="M665.8,926.0L803.0,928.5L940.0,932.0L1097.5,938.0L1176.2,945.9L1255.0,953.8L1320.0,962.2L1419.2,973.8L1439.6,980.7L1490.5,1003.1L1557.8,1021.5L1560.0,1021.3L1597.8,1040.2L1611.3,1052.4L1643.6,1079.4L1647.7,1092.8L1654.0,1102.0L1654.6,1102.7L1655.2,1103.9L1655.7,1104.3L1656.3,1105.6L1656.9,1106.0L1657.5,1107.2L1658.1,1107.7L1658.6,1109.0L1659.2,1109.4L1659.8,1110.4L1660.3,1111.5L1660.9,1112.0L1661.4,1113.2L1662.0,1113.9L1662.5,1115.0L1663.0,1115.5L1663.6,1117.0L1664.1,1117.4L1664.7,1118.7L1665.2,1119.2L1665.7,1120.4L1666.3,1120.9L1666.8,1122.2L1667.4,1122.9L1667.9,1123.9L1668.4,1125.0L1668.9,1125.5L1668.6,1126.9L1669.5,1130.0L1670.3,1126.9L1670.0,1127.5L1670.5,1128.8L1671.0,1129.3L1671.6,1130.6L1672.1,1131.2L1672.6,1132.4L1672.4,1132.9L1673.1,1130.7L1673.9,1132.9L1673.7,1134.2L1674.2,1134.8L1674.7,1136.0L1675.3,1137.0L1675.8,1137.4L1676.4,1138.7L1677.0,1139.2L1677.5,1140.4L1678.1,1141.0L1678.7,1142.3L1679.2,1142.7L1679.8,1143.8L1680.4,1144.4L1681.0,1145.5L1681.5,1145.9L1682.1,1147.2L1682.7,1147.6L1683.2,1149.1L1683.8,1149.4L1684.4,1150.8L1684.9,1151.1L1685.5,1152.2L1686.2,1153.2L1686.8,1153.5L1687.5,1154.8L1688.2,1155.1L1688.9,1156.3L1689.5,1156.7L1690.2,1157.9L1690.9,1158.4L1691.6,1159.5L1692.2,1159.9L1692.9,1161.1L1693.6,1161.7L1694.3,1162.4L1694.9,1163.6L1695.6,1164.1L1696.3,1165.3L1697.0,1165.6L1697.7,1167.0L1698.3,1167.4L1699.0,1168.4" stroke="#bcdaa3" stroke-width="3.2" fill="none" stroke-linejoin="miter" stroke-miterlimit="4"/>
<path d="M803.6,927.6L940.0,928.9L1045.0,929.4L1139.5,933.6L1247.0,936.7L1320.0,942.5L1419.2,950.9L1533.4,974.6L1576.2,1005.2L1587.0,1020.0L1599.1,1030.8L1611.9,1049.7L1650.4,1076.7L1654.0,1081.2L1653.8,1081.7L1654.7,1078.6L1655.5,1081.7L1655.3,1082.9L1656.0,1083.4L1656.6,1084.8L1657.3,1085.1L1657.9,1086.3L1658.6,1086.8L1659.2,1088.0L1659.9,1088.4L1660.5,1089.6L1661.2,1090.2L1661.9,1090.8L1662.5,1092.0L1663.2,1092.5L1663.9,1093.9L1664.6,1094.2L1665.2,1095.5L1665.3,1095.8L1665.9,1093.5L1666.6,1095.8L1666.6,1096.9L1667.0,1098.1L1667.3,1098.7L1667.7,1100.2L1667.1,1100.7L1668.0,1098.0L1669.0,1100.7L1668.4,1102.0L1668.8,1102.7L1669.1,1104.0L1669.5,1104.6L1669.8,1105.9L1670.2,1106.6L1670.6,1107.9L1670.9,1108.5L1671.3,1109.8L1671.6,1110.5L1672.0,1111.7L1672.4,1112.9L1671.6,1113.4L1672.8,1116.7L1674.1,1113.4L1673.3,1114.7L1672.9,1115.1L1673.7,1113.0L1674.4,1115.1L1674.1,1116.6L1674.5,1117.1L1674.9,1118.4L1675.3,1119.1L1675.8,1120.3L1676.2,1120.8L1676.6,1122.2L1677.0,1122.7L1677.4,1124.1L1676.9,1124.4L1677.9,1127.4L1678.8,1124.4L1678.3,1125.9L1678.7,1126.6L1679.2,1127.3L1679.8,1128.5L1680.3,1129.0L1680.9,1130.3L1681.4,1130.7L1681.9,1132.0L1682.5,1132.4L1683.0,1133.7L1683.6,1134.3L1684.1,1135.6L1684.6,1136.1L1685.2,1137.4L1685.7,1137.8L1686.3,1139.0L1686.8,1139.6L1687.3,1140.7L1687.9,1141.2L1688.4,1142.6L1689.0,1143.0L1689.5,1144.1L1689.8,1145.2L1690.1,1145.8L1690.5,1147.2L1690.8,1147.8L1691.1,1149.1L1691.4,1149.5L1691.7,1151.0L1692.0,1151.6L1692.4,1152.8L1692.7,1153.5L1693.0,1154.8L1693.3,1155.4L1693.6,1156.6L1693.9,1157.2L1694.3,1158.6L1694.6,1159.2L1694.9,1160.3L1694.4,1161.6L1695.2,1159.0L1696.1,1161.6L1695.6,1162.1L1695.9,1163.5L1696.3,1164.1L1696.6,1165.6L1697.0,1166.2L1697.3,1167.7L1696.7,1168.1L1697.6,1170.6L1698.5,1168.1L1698.0,1169.6L1698.3,1170.2L1698.7,1171.5L1699.0,1172.4" stroke="#5da8ba" stroke-width="3.2" fill="none" stroke-linejoin="miter" stroke-miterlimit="4"/>
<path d="M578.00,926.00V1207.56H1700.00" stroke="#888888" stroke-width="1.6" fill="none"/>
<text x="566.6" y="1212.9" font-size="16" text-anchor="end" fill="#000">0.0</text>
<text x="566.6" y="1156.5" font-size="16" text-anchor="end" fill="#000">0.2</text>
<text x="566.6" y="1100.2" font-size="16" text-anchor="end" fill="#000">0.4</text>
<text x="566.6" y="1043.9" font-size="16" text-anchor="end" fill="#000">0.6</text>
<text x="566.6" y="987.6" font-size="16" text-anchor="end" fill="#000">0.8</text>
<text x="566.6" y="931.3" font-size="16" text-anchor="end" fill="#000">1.0</text>
<text x="578.0" y="1231.9" font-size="16" text-anchor="start" fill="#000">0.00</text>
<text x="634.1" y="1231.9" font-size="16" text-anchor="middle" fill="#000">0.05</text>
<text x="690.2" y="1231.9" font-size="16" text-anchor="middle" fill="#000">0.10</text>
<text x="746.3" y="1231.9" font-size="16" text-anchor="middle" fill="#000">0.15</text>
<text x="802.4" y="1231.9" font-size="16" text-anchor="middle" fill="#000">0.20</text>
<text x="858.5" y="1231.9" font-size="16" text-anchor="middle" fill="#000">0.25</text>
<text x="914.6" y="1231.9" font-size="16" text-anchor="middle" fill="#000">0.30</text>
<text x="970.7" y="1231.9" font-size="16" text-anchor="middle" fill="#000">0.35</text>
<text x="1026.8" y="1231.9" font-size="16" text-anchor="middle" fill="#000">0.40</text>
<text x="1082.9" y="1231.9" font-size="16" text-anchor="middle" fill="#000">0.45</text>
<text x="1139.0" y="1231.9" font-size="16" text-anchor="middle" fill="#000">0.50</text>
<text x="1195.1" y="1231.9" font-size="16" text-anchor="middle" fill="#000">0.55</text>
<text x="1251.2" y="1231.9" font-size="16" text-anchor="middle" fill="#000">0.60</text>
<text x="1307.3" y="1231.9" font-size="16" text-anchor="middle" fill="#000">0.65</text>
<text x="1363.4" y="1231.9" font-size="16" text-anchor="middle" fill="#000">0.70</text>
<text x="1419.5" y="1231.9" font-size="16" text-anchor="middle" fill="#000">0.75</text>
<text x="1475.6" y="1231.9" font-size="16" text-anchor="middle" fill="#000">0.80</text>
<text x="1531.7" y="1231.9" font-size="16" text-anchor="middle" fill="#000">0.85</text>
<text x="1587.8" y="1231.9" font-size="16" text-anchor="middle" fill="#000">0.90</text>
<text x="1643.9" y="1231.9" font-size="16" text-anchor="middle" fill="#000">0.95</text>
<text x="1700.0" y="1231.9" font-size="16" text-anchor="end" fill="#000">1.00</text>
<text x="1139.0" y="906" font-size="21" font-weight="bold" text-anchor="middle" fill="#000">Average precision on validation set after each epoch</text>
<text x="1139.0" y="1255.8" font-size="17.6" font-weight="bold" text-anchor="middle" fill="#000">Recall</text>
<text transform="translate(535,1066.8) rotate(-90)" font-size="17.6" font-weight="bold" text-anchor="middle" fill="#000">Precision</text>
<text x="1731.1" y="940.4" font-size="17.8" font-weight="bold" fill="#000">Training epoch</text>
<path d="M1733.0,960.4h16" stroke="#e0714f" stroke-width="2.5"/>
<text x="1756.8" y="965.1" font-size="16" fill="#000">0</text>
<path d="M1733.0,981.2h16" stroke="#f7bc6e" stroke-width="2.5"/>
<text x="1756.8" y="985.9" font-size="16" fill="#000">1</text>
<path d="M1733.0,1002.0h16" stroke="#fdf2aa" stroke-width="2.5"/>
<text x="1756.8" y="1006.7" font-size="16" fill="#000">2</text>
<path d="M1733.0,1022.7h16" stroke="#bcdaa3" stroke-width="2.5"/>
<text x="1756.8" y="1027.4" font-size="16" fill="#000">3</text>
<path d="M1733.0,1043.5h16" stroke="#5da8ba" stroke-width="2.5"/>
<text x="1756.8" y="1048.2" font-size="16" fill="#000">4</text>
</svg>
<div style="position:absolute;left:0px;top:0px;width:1942px;height:80px;background:#1c1d21"></div>
<div style="position:absolute;left:0px;top:80px;width:78px;height:1169px;background:#fff"></div>
<div style="position:absolute;left:78px;top:80px;width:2px;height:1169px;background:#dedee1"></div>
<div style="position:absolute;left:80px;top:80px;width:360px;height:1169px;background:#fff"></div>
<div style="position:absolute;left:440px;top:80px;width:2px;height:1169px;background:#dedee1"></div>
<div style="position:absolute;left:80px;top:318px;width:360px;height:72px;box-sizing:border-box;background:#f9f9f9;border-top:2px solid #dedee1;border-bottom:2px solid #dedee1"></div>
<div style="position:absolute;left:0px;top:162px;width:80px;height:83.6px;background:#2587b7"></div>
<div style="position:absolute;left:0px;top:1250px;width:1942px;height:84px;background:#fff"></div>
<div style="position:absolute;left:0px;top:1248px;width:1942px;height:2px;background:#dedee1"></div>
<div style="position:absolute;left:104.5px;top:172.4px;width:309px;height:53.4px;box-sizing:border-box;background:#fff;border:2px solid #d3d3d3;border-radius:7px"></div>
<div style="position:absolute;left:240px;top:246.3px;width:57.8px;height:45.4px;background:#fce5da;border-radius:6px"></div>
<div style="position:absolute;left:192px;top:1165px;width:218px;height:58.4px;background:#fff;border-radius:8px;box-shadow:0 2px 10px rgba(0,0,0,0.08)"></div>
<div style="position:absolute;left:1700px;top:1270px;width:52px;height:54px;box-sizing:border-box;background:#f4f4f4;border:2px solid #d8d8d8;border-radius:5px 0 0 5px"></div>
<div style="position:absolute;left:1752px;top:1270px;width:52px;height:54px;box-sizing:border-box;background:#fafafa;border:2px solid #eeeeee;border-left:none;border-radius:0 5px 5px 0"></div>
<div class="t" style="left:159.11px;top:24.71px;font-size:23.5px;color:#bdbdbd;letter-spacing:-0.130px;">demo-team</div>
<div class="t" style="left:317.97px;top:24.71px;font-size:23.5px;color:#bdbdbd;letter-spacing:-0.202px;">Projects</div>
<div class="t" style="left:442.31px;top:24.71px;font-size:23.5px;color:#bdbdbd;letter-spacing:-0.086px;">custom-charts</div>
<div class="t" style="left:105.04px;top:115.82px;font-size:28.8px;color:#76726e;letter-spacing:-0.298px;">Runs (8)</div>
<div class="t" style="left:153.37px;top:342.41px;font-size:23.5px;color:#3c3c3c;letter-spacing:0.659px;">Name</div>
<div class="t" style="left:223.34px;top:342.41px;font-size:23.5px;color:#aaa;letter-spacing:0.175px;">(7 visualized)</div>
<div class="t" style="left:192.51px;top:416.71px;font-size:23.5px;color:#444;letter-spacing:-0.047px;">all panels, E=10</div>
<div class="t" style="left:192.51px;top:486.41px;font-size:23.5px;color:#444;letter-spacing:-0.054px;">all panels, E=5</div>
<div class="t" style="left:192.25px;top:556.51px;font-size:23.5px;color:#444;letter-spacing:-0.300px;transform:scaleX(0.9620);transform-origin:0 0;">AP: N=100, E=1</div>
<div class="t" style="left:192.25px;top:628.61px;font-size:23.5px;color:#444;letter-spacing:-0.300px;transform:scaleX(0.9611);transform-origin:0 0;">AP: N=100, E=5</div>
<div class="t" style="left:192.25px;top:698.51px;font-size:23.5px;color:#444;letter-spacing:-0.300px;transform:scaleX(0.9660);transform-origin:0 0;">AP: N=1000, E=1</div>
<div class="t" style="left:192.25px;top:768.36px;font-size:23.5px;color:#444;letter-spacing:-0.300px;transform:scaleX(0.9663);transform-origin:0 0;">AP: N=1000, E=5</div>
<div class="t" style="left:192.25px;top:838.51px;font-size:23.5px;color:#444;letter-spacing:-0.300px;transform:scaleX(0.9715);transform-origin:0 0;">AP: N=5000, E=10</div>
<div class="t" style="left:192.51px;top:908.21px;font-size:23.5px;color:#444;letter-spacing:0.644px;">composite histogram</div>
<div class="t" style="left:211.78px;top:1182.21px;font-size:23.5px;color:#777;letter-spacing:-0.300px;transform:scaleX(0.9619);transform-origin:0 0;">1-8</div>
<div class="t" style="left:264.91px;top:1182.21px;font-size:23.5px;color:#777;letter-spacing:0.035px;">of 8</div>
<div class="t" style="left:160.97px;top:1288.31px;font-size:23.5px;color:#4c4c4c;letter-spacing:-0.200px;">My Workspace</div>
<div class="t" style="left:1397.14px;top:1286.65px;font-size:21.2px;color:#b6b6b6;letter-spacing:-0.021px;">Changes saved automatically</div>
<svg width="1942" height="1334" viewBox="0 0 1942 1334"><rect x="19.00" y="18.45" width="5.6" height="3.9" rx="0.8" fill="#f8b93c"/>
<circle cx="22" cy="30.3" r="4.1" fill="#f8b93c"/>
<circle cx="21.6" cy="40.8" r="2.7" fill="#f8b93c"/>
<circle cx="22" cy="51" r="4.1" fill="#f8b93c"/>
<circle cx="37.5" cy="24.7" r="2.7" fill="#f8b93c"/>
<circle cx="37.5" cy="35" r="2.7" fill="#f8b93c"/>
<circle cx="37.8" cy="45.5" r="4.1" fill="#f8b93c"/>
<rect x="34.70" y="53.35" width="5.6" height="3.9" rx="0.8" fill="#f8b93c"/>
<rect x="50.80" y="18.45" width="5.6" height="3.9" rx="0.8" fill="#f8b93c"/>
<circle cx="53.6" cy="30.3" r="4.1" fill="#f8b93c"/>
<circle cx="53.4" cy="40.8" r="2.7" fill="#f8b93c"/>
<rect x="50.60" y="48.30" width="5.6" height="5.4" rx="2" fill="#f8b93c"/>
<circle cx="109.5" cy="36.5" r="10.4" fill="none" stroke="#c4c4c4" stroke-width="1.7"/><path d="M117,44.2L123.6,50.2" stroke="#c4c4c4" stroke-width="1.7" stroke-linecap="round"/>
<path d="M295.0,29.9l7.2,7.2l-7.2,7.2" fill="none" stroke="#8c8c8c" stroke-width="1.8"/>
<path d="M419.4,29.9l7.2,7.2l-7.2,7.2" fill="none" stroke="#8c8c8c" stroke-width="1.8"/>
<rect x="599.5" y="34.7" width="16.9" height="11" rx="1.6" fill="none" stroke="#c6c6c6" stroke-width="2.4"/><path d="M608.8,34.4V30.2a5.4,5.8 0 0 1 10.8,0V31.6" fill="none" stroke="#c6c6c6" stroke-width="2.4"/>
<defs><clipPath id="av"><ellipse cx="1907" cy="37.9" rx="25.3" ry="26.2"/></clipPath><linearGradient id="fg" x1="0" y1="0" x2="0" y2="1"><stop offset="0" stop-color="#f1e2b8"/><stop offset="0.55" stop-color="#f2c3a2"/><stop offset="1" stop-color="#e9c9a8"/></linearGradient><filter id="avb" x="-10%" y="-10%" width="120%" height="120%"><feGaussianBlur stdDeviation="0.7"/></filter></defs><g clip-path="url(#av)"><rect x="1880" y="10" width="56" height="56" fill="#e6e4e7"/><g filter="url(#avb)"><path d="M1882,36C1888,34 1893,36 1897,40L1896,52L1884,50Z" fill="#e9a77c"/><path d="M1885,50C1890,46 1897,48 1899,54L1898,66H1886Z" fill="#d9caa6"/><path d="M1899,24C1902,15 1912,13 1919,16C1926,19 1925,30 1923,40L1921,52L1903,50Z" fill="#a2837a"/><path d="M1900,30C1901,20 1909,15 1916,16C1910,14 1903,15 1899,22Z" fill="#6f5f5c"/><path d="M1901,36C1901,26 1908,21 1914,22C1920,23 1922,32 1921,40C1920,50 1915,57 1910,57C1904,57 1901,46 1901,36Z" fill="url(#fg)"/><path d="M1917,20C1922,24 1923,32 1921.5,40C1921,30 1919,25 1915,22Z" fill="#e39b72"/><path d="M1901,55C1905,50 1915,50 1920,54L1922,66H1900Z" fill="#dccca8"/><path d="M1907,16C1901,20 1898,28 1896.5,36C1895.5,44 1897.5,50 1899.5,56L1902,58C1900,50 1899,44 1900,37C1901,29 1903,22 1908,18Z" fill="#2b2724"/><path d="M1899,40C1901,46 1902,52 1901,60L1905,62C1905,54 1903,46 1900,38Z" fill="#5a4c48"/><path d="M1920,36C1919.4,41 1918,45 1917,47C1919.6,44 1921,40 1921,36Z" fill="#4a403c"/><path d="M1900,31.5h6.4M1910.6,31.5h5" stroke="#8a7474" stroke-width="1.4"/><rect x="1923" y="10" width="12" height="56" fill="#e9e7eb"/></g></g>
<circle cx="36.9" cy="120.6" r="16.6" fill="none" stroke="#a9a9a9" stroke-width="1.6"/><text x="37.4" y="129" style="font-family:&quot;Liberation Serif&quot;,serif;font-style:italic" font-size="25" text-anchor="middle" fill="#a9a9a9">i</text>
<g fill="none" stroke="#fff" stroke-width="1.45"><path d="M21.2,218.2H52.7" stroke-width="1.9"/><path d="M26,207.9L30.7,201.2M35.4,200.2L38.6,202.4M43.4,201.3L48,194.9"/><circle cx="24.3" cy="210.6" r="2.7"/><circle cx="32.4" cy="198.5" r="2.7"/><circle cx="41.4" cy="204" r="2.7"/><circle cx="49.9" cy="192.2" r="2.7"/></g>
<g fill="none" stroke="#a9a9a9" stroke-width="1.7"><rect x="18.6" y="273.8" width="36.8" height="26.8" rx="2.6"/><path d="M18.6,281.8H55.4M27.4,273.8V300.6"/></g>
<g fill="none" stroke="#a9a9a9" stroke-width="1.6" stroke-linejoin="round"><path d="M29.6,356H25.5a2.4,2.4 0 0 0 -2.4,2.4V385.6a2.4,2.4 0 0 0 2.4,2.4H41.6L51,378.6V358.4a2.4,2.4 0 0 0 -2.4,-2.4H44.4"/><path d="M41.6,388V381a2.4,2.4 0 0 1 2.4,-2.4H51"/><path d="M29.6,357.4v-1.6a1.6,1.6 0 0 1 1.6,-1.6H33.6a3.5,2.3 0 0 1 7,0H42.8a1.6,1.6 0 0 1 1.6,1.6v1.6a1.8,1.8 0 0 1 -1.8,1.8H31.4a1.8,1.8 0 0 1 -1.8,-1.8Z"/><path d="M28.6,367H45.4M28.6,371H45.4M28.6,374.8H38.8"/></g>
<g fill="none" stroke="#a9a9a9" stroke-width="1.6" stroke-linejoin="round" stroke-linecap="round"><path d="M50.9,437.6a1.4,1.4 0 0 1 2.5,1.3L45.6,454.6L43.1,453.3Z"/><path d="M34.4,455.6C38,451 46.5,455.4 47.6,461C48.2,466 45,473.4 37.2,473.6C30,473.4 24,468 21.8,463.2C27,463 31.6,459.6 34.4,455.6Z"/><path d="M34.4,455.6C38.4,456.6 45,460 47.6,462.6"/></g>
<g fill="none" stroke="#a9a9a9" stroke-width="1.6"><ellipse cx="37.3" cy="525.6" rx="14.8" ry="5.8"/><path d="M22.5,525.6V549.4a14.8,5.8 0 0 0 29.6,0V525.6"/><path d="M22.5,533.6a14.8,5.8 0 0 0 29.6,0M22.5,541.6a14.8,5.8 0 0 0 29.6,0"/></g>
<g fill="none" stroke="#8a8a8a" stroke-width="1.6"><rect x="371" y="118" width="25.6" height="20" rx="1"/><path d="M371,124.6H396.6M371,131.2H396.6M377.6,118V138"/><path d="M404.2,121.4l6.6,7l-6.6,7" stroke="#aaa" stroke-width="1.5"/></g>
<circle cx="130.9" cy="198.4" r="11" fill="none" stroke="#555" stroke-width="1.7"/><path d="M138.8,206.4L144,211.8" stroke="#555" stroke-width="1.7" stroke-linecap="round"/>
<circle cx="379.4" cy="209.2" r="2.5" fill="#2b8bb3"/><path d="M392.1,188.6v12.4M386.7,191.7l10.8,6.2M397.5,191.7l-10.8,6.2" stroke="#2b8bb3" stroke-width="1.6"/>
<path d="M121,261H146.5M125.4,267.9H142.2M129.9,275.1H137.7" stroke="#555" stroke-width="1.7"/>
<g fill="none" stroke="#555" stroke-width="1.7"><rect x="187.8" y="257.2" width="27.4" height="19.8" rx="3"/><path d="M197,262.2H210.6M197,267.1H210.6M197,272H210.6"/><path d="M192,262.2h2.6M192,267.1h2.6M192,272h2.6"/></g>
<g fill="none" stroke="#111" stroke-width="1.8"><path d="M263,261.2V278M258.6,273.8l4.4,4.4l4.4,-4.4"/><path d="M274.7,274.6V258.2M270.3,262.4l4.4,-4.4l4.4,4.4"/></g>
<path d="M113.6,354.2C118,350 122.4,348.6 126.8,348.6C131.2,348.6 135.6,350 140,354.2C135.6,358.6 131.2,360.4 126.8,360.4C122.4,360.4 118,358.6 113.6,354.2Z" fill="none" stroke="#3a3a3a" stroke-width="1.5"/><path d="M123.8,349.5A3.9,3.9 0 1 0 130.2,349.5Z" fill="#555"/>
<path d="M370.4,357.4h11.4l-5.7,-6.6Z" fill="#333"/>
<circle cx="167.55" cy="426.3" r="12.35" fill="#d1606e"/>
<circle cx="167.55" cy="496.45" r="12.35" fill="#8749bf"/>
<circle cx="167.55" cy="566.4" r="12.35" fill="#f5b83d"/>
<circle cx="167.55" cy="636.4" r="12.35" fill="#4f9a94"/>
<circle cx="167.55" cy="708.3" r="12.35" fill="#c47dca"/>
<circle cx="167.55" cy="778.35" r="12.35" fill="#8bbccb"/>
<circle cx="167.55" cy="848.3" r="12.35" fill="#a5ad7b"/>
<circle cx="167.55" cy="918.35" r="12.35" fill="#68a0e0"/>
<g fill="none" stroke="#b9b9b9" stroke-width="1.5" stroke-linecap="round"><path d="M112.8,421.7Q125,435.5 137.4,421.7"/><path d="M116.2,426.5l-2.6,3.6M121.7,428.7l-1.5,3.8M128.5,428.7l1.5,3.8M134.2,426.5l2.6,3.4"/></g>
<path d="M112.4,498.2C116.8,492.8 121.2,490.0 125.5,490.0C129.8,490.0 134.2,492.8 138.6,498.2C134.2,503.59999999999997 129.8,506.4 125.5,506.4C121.2,506.4 116.8,503.59999999999997 112.4,498.2Z" fill="none" stroke="#2b8a9f" stroke-width="1.5"/><circle cx="125.5" cy="498.2" r="4.7" fill="#2b8cbf"/>
<path d="M112.4,568.0C116.8,562.6 121.2,559.8 125.5,559.8C129.8,559.8 134.2,562.6 138.6,568.0C134.2,573.4 129.8,576.2 125.5,576.2C121.2,576.2 116.8,573.4 112.4,568.0Z" fill="none" stroke="#2b8a9f" stroke-width="1.5"/><circle cx="125.5" cy="568.0" r="4.7" fill="#2b8cbf"/>
<path d="M112.4,638.0C116.8,632.6 121.2,629.8 125.5,629.8C129.8,629.8 134.2,632.6 138.6,638.0C134.2,643.4 129.8,646.2 125.5,646.2C121.2,646.2 116.8,643.4 112.4,638.0Z" fill="none" stroke="#2b8a9f" stroke-width="1.5"/><circle cx="125.5" cy="638.0" r="4.7" fill="#2b8cbf"/>
<path d="M112.4,708.3C116.8,702.9 121.2,700.0999999999999 125.5,700.0999999999999C129.8,700.0999999999999 134.2,702.9 138.6,708.3C134.2,713.6999999999999 129.8,716.5 125.5,716.5C121.2,716.5 116.8,713.6999999999999 112.4,708.3Z" fill="none" stroke="#2b8a9f" stroke-width="1.5"/><circle cx="125.5" cy="708.3" r="4.7" fill="#2b8cbf"/>
<path d="M112.4,778.25C116.8,772.85 121.2,770.05 125.5,770.05C129.8,770.05 134.2,772.85 138.6,778.25C134.2,783.65 129.8,786.45 125.5,786.45C121.2,786.45 116.8,783.65 112.4,778.25Z" fill="none" stroke="#2b8a9f" stroke-width="1.5"/><circle cx="125.5" cy="778.25" r="4.7" fill="#2b8cbf"/>
<path d="M112.4,850.4C116.8,845.0 121.2,842.1999999999999 125.5,842.1999999999999C129.8,842.1999999999999 134.2,845.0 138.6,850.4C134.2,855.8 129.8,858.6 125.5,858.6C121.2,858.6 116.8,855.8 112.4,850.4Z" fill="none" stroke="#2b8a9f" stroke-width="1.5"/><circle cx="125.5" cy="850.4" r="4.7" fill="#2b8cbf"/>
<path d="M112.4,920.3000000000001C116.8,914.9000000000001 121.2,912.1 125.5,912.1C129.8,912.1 134.2,914.9000000000001 138.6,920.3000000000001C134.2,925.7 129.8,928.5000000000001 125.5,928.5000000000001C121.2,928.5000000000001 116.8,925.7 112.4,920.3000000000001Z" fill="none" stroke="#2b8a9f" stroke-width="1.5"/><circle cx="125.5" cy="920.3000000000001" r="4.7" fill="#2b8cbf"/>
<path d="M247,1193.2h10.6l-5.3,5.8Z" fill="#666"/>
<g fill="none" stroke="#cfcfcf" stroke-width="1.7"><path d="M344,1186.4l-9.2,8.2l9.2,8.2"/><path d="M373.6,1186.4l9.2,8.2l-9.2,8.2"/></g>
<path d="M1398.2,1311H1674" stroke="#ababab" stroke-width="1.7" stroke-dasharray="5.3 4.6"/>
<circle cx="336.2" cy="1289.4" r="2.9" fill="#858383"/>
<circle cx="336.2" cy="1298.9" r="2.9" fill="#858383"/>
<circle cx="336.2" cy="1308.4" r="2.9" fill="#858383"/>
<path d="M1717.1,1292.8A9.3,9.3 0 1 1 1717.1,1302.1" fill="none" stroke="#737373" stroke-width="2.9"/><path d="M1714.6,1286.8v8.4h8.4" fill="none" stroke="#737373" stroke-width="2.9"/>
<path d="M1785.5,1292.8A9.3,9.3 0 1 0 1785.5,1302.1" fill="none" stroke="#dcdcdc" stroke-width="2.9"/><path d="M1788.0,1286.8v8.4h-8.4" fill="none" stroke="#dcdcdc" stroke-width="2.9"/>
<defs><filter id="sh" x="-30%" y="-30%" width="160%" height="160%"><feGaussianBlur stdDeviation="5"/></filter></defs><circle cx="1871.7" cy="1265" r="48" fill="#000" opacity="0.10" filter="url(#sh)"/><circle cx="1871.7" cy="1263.6" r="47.4" fill="#c6c6c6"/><path d="M1853.9,1237.9H1890a4,4 0 0 1 4,4V1289.8L1880,1284.3H1853.9a4,4 0 0 1 -4,-4V1241.9a4,4 0 0 1 4,-4Z" fill="#fff"/><path d="M1856.8,1270.7Q1871.7,1283 1887.2,1270.7" fill="none" stroke="#c8c8c8" stroke-width="2.6" stroke-linecap="round"/>
<circle cx="527.4" cy="134.2" r="8.6" fill="none" stroke="#bdbdbd" stroke-width="1.7"/><path d="M533.6,140.4L538,145" stroke="#bdbdbd" stroke-width="1.7" stroke-linecap="round"/>
<g fill="none" stroke="#a8a8a8" stroke-width="1.6" stroke-linecap="round"><path d="M1438.6,127.6C1437.6,124.6 1434.4,124.4 1432.4,127.8L1426.8,137.2C1424.8,140.6 1421.8,140.4 1420.8,137.4"/><path d="M1423,127.4C1424.4,124.4 1427.4,124.2 1428.4,127.8L1431.2,137C1432.2,140.6 1435.4,140.4 1436.8,137.4"/><path d="M1416,147.8H1444.4M1440.2,143.8l4.4,4l-4.4,4" stroke-linecap="butt"/></g>
<g fill="none" stroke="#a8a8a8" stroke-width="1.6" stroke-linejoin="round"><rect x="1489.6" y="123.6" width="13.6" height="4" rx="2"/><path d="M1503.2,125.6a3.4,3.4 0 0 1 3.4,3.4V144.8a1.6,1.6 0 0 1 -1.6,1.6H1479.6a1.6,1.6 0 0 1 -1.6,-1.6C1478,138 1484,131.6 1492,131.2H1506.4"/><path d="M1478.4,142.4H1506.4"/><circle cx="1493.3" cy="137.4" r="1.9"/><circle cx="1499.7" cy="137.4" r="1.9"/></g>
<g fill="none" stroke="#a8a8a8" stroke-width="1.5"><path d="M1559.2,120.9l7,7M1566.2,120.9l-7,7"/><circle cx="1550" cy="140.6" r="1.9"/><circle cx="1571" cy="140.6" r="1.9"/><circle cx="1543.7" cy="148.9" r="1.9"/><circle cx="1556.6" cy="148.6" r="1.9"/></g>
<path d="M1620.9,119.4L1621.4,119.4L1622.0,119.5L1622.5,119.6L1623.0,120.0L1623.4,120.8L1623.7,122.2L1623.8,123.6L1624.0,124.5L1624.3,124.8L1624.6,125.1L1625.0,125.2L1625.3,125.4L1625.7,125.5L1626.1,125.7L1626.4,125.7L1626.9,125.7L1627.7,125.2L1628.8,124.3L1629.9,123.5L1630.8,123.2L1631.4,123.3L1631.9,123.6L1632.3,123.9L1632.7,124.3L1633.1,124.7L1633.4,125.1L1633.7,125.6L1633.8,126.2L1633.5,127.1L1632.7,128.2L1631.8,129.3L1631.3,130.1L1631.3,130.6L1631.3,130.9L1631.5,131.3L1631.6,131.7L1631.8,132.0L1631.9,132.4L1632.2,132.7L1632.5,133.0L1633.4,133.2L1634.8,133.3L1636.2,133.6L1637.0,134.0L1637.4,134.5L1637.5,135.0L1637.6,135.6L1637.6,136.1L1637.6,136.6L1637.5,137.2L1637.4,137.7L1637.0,138.2L1636.2,138.6L1634.8,138.9L1633.4,139.0L1632.5,139.2L1632.2,139.5L1631.9,139.8L1631.8,140.2L1631.6,140.5L1631.5,140.9L1631.3,141.3L1631.3,141.6L1631.3,142.1L1631.8,142.9L1632.7,144.0L1633.5,145.1L1633.8,146.0L1633.7,146.6L1633.4,147.1L1633.1,147.5L1632.7,147.9L1632.3,148.3L1631.9,148.6L1631.4,148.9L1630.8,149.0L1629.9,148.7L1628.8,147.9L1627.7,147.0L1626.9,146.5L1626.4,146.5L1626.1,146.5L1625.7,146.7L1625.3,146.8L1625.0,147.0L1624.6,147.1L1624.3,147.4L1624.0,147.7L1623.8,148.6L1623.7,150.0L1623.4,151.4L1623.0,152.2L1622.5,152.6L1622.0,152.7L1621.4,152.8L1620.9,152.8L1620.4,152.8L1619.8,152.7L1619.3,152.6L1618.8,152.2L1618.4,151.4L1618.1,150.0L1618.0,148.6L1617.8,147.7L1617.5,147.4L1617.2,147.1L1616.8,147.0L1616.5,146.8L1616.1,146.7L1615.7,146.5L1615.4,146.5L1614.9,146.5L1614.1,147.0L1613.0,147.9L1611.9,148.7L1611.0,149.0L1610.4,148.9L1609.9,148.6L1609.5,148.3L1609.1,147.9L1608.7,147.5L1608.4,147.1L1608.1,146.6L1608.0,146.0L1608.3,145.1L1609.1,144.0L1610.0,142.9L1610.5,142.1L1610.5,141.6L1610.5,141.3L1610.3,140.9L1610.2,140.5L1610.0,140.2L1609.9,139.8L1609.6,139.5L1609.3,139.2L1608.4,139.0L1607.0,138.9L1605.6,138.6L1604.8,138.2L1604.4,137.7L1604.3,137.2L1604.2,136.6L1604.2,136.1L1604.2,135.6L1604.3,135.0L1604.4,134.5L1604.8,134.0L1605.6,133.6L1607.0,133.3L1608.4,133.2L1609.3,133.0L1609.6,132.7L1609.9,132.4L1610.0,132.0L1610.2,131.7L1610.3,131.3L1610.5,130.9L1610.5,130.6L1610.5,130.1L1610.0,129.3L1609.1,128.2L1608.3,127.1L1608.0,126.2L1608.1,125.6L1608.4,125.1L1608.7,124.7L1609.1,124.3L1609.5,123.9L1609.9,123.6L1610.4,123.3L1611.0,123.2L1611.9,123.5L1613.0,124.3L1614.1,125.2L1614.9,125.7L1615.4,125.7L1615.7,125.7L1616.1,125.5L1616.5,125.4L1616.8,125.2L1617.2,125.1L1617.5,124.8L1617.8,124.5L1618.0,123.6L1618.1,122.2L1618.4,120.8L1618.8,120.0L1619.3,119.6L1619.8,119.5L1620.4,119.4L1620.9,119.4Z" fill="none" stroke="#a8a8a8" stroke-width="1.6" stroke-linejoin="round"/><circle cx="1620.9" cy="136.1" r="3.9" fill="none" stroke="#a8a8a8" stroke-width="1.6"/>
<path d="M467,232.4l7.7,8l7.7,-8" fill="none" stroke="#a6a6a6" stroke-width="1.7"/>
<path d="M467,806.4l7.7,8l7.7,-8" fill="none" stroke="#a6a6a6" stroke-width="1.7"/>
<path d="M1864.2,234.2H1897M1880.6,217.8V250.6" stroke="#bdbdbd" stroke-width="2.2"/>
<path d="M1864.2,808.1H1897M1880.6,791.7V824.5" stroke="#bdbdbd" stroke-width="2.2"/>
<path d="M1699.6,228.2C1703.6,228.2 1706.6,229.6 1706.6,232.6C1706.6,229.6 1709.6,228.2 1713.6,228.2M1706.6,232.6V254.4M1699.6,258.8C1703.6,258.8 1706.6,257.4 1706.6,254.4C1706.6,257.4 1709.6,258.8 1713.6,258.8M1703.8,243.6H1709.4" fill="none" stroke="#000" stroke-width="2"/></svg>
</div></body></html>
